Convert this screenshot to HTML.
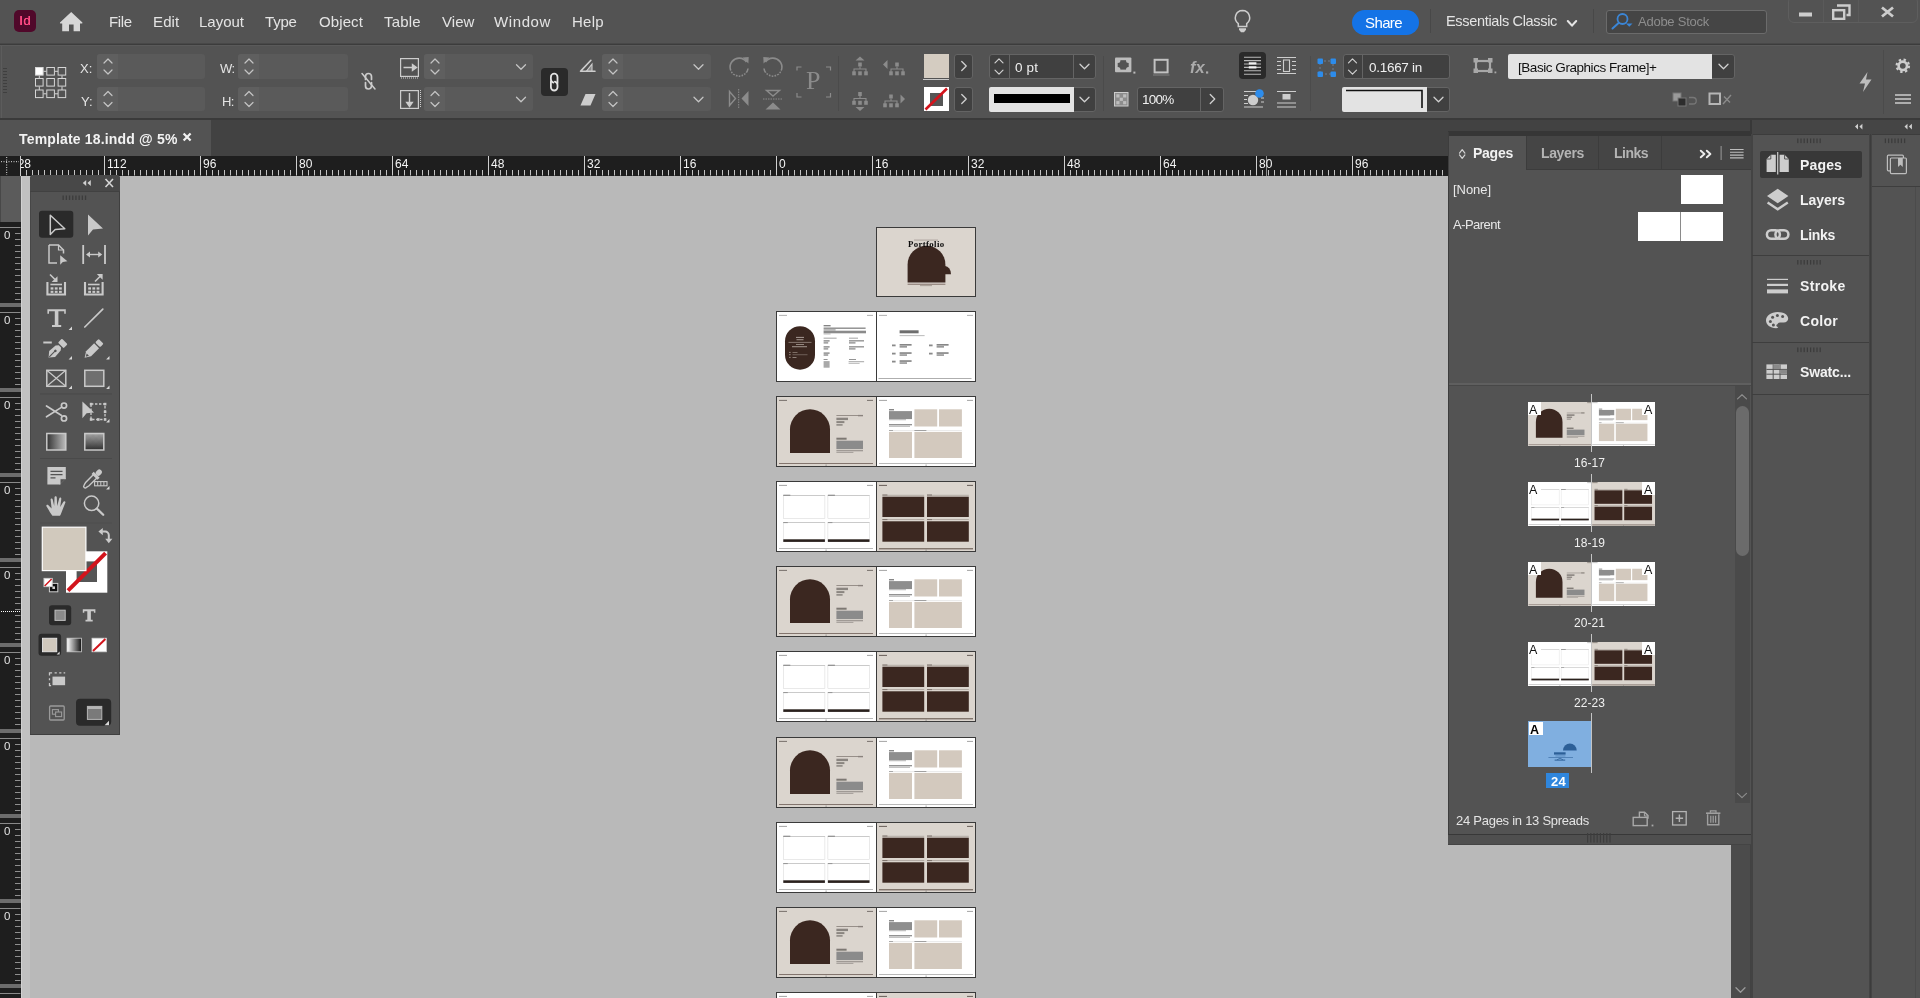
<!DOCTYPE html>
<html><head><meta charset="utf-8"><title>Template 18.indd</title><style>
*{margin:0;padding:0;box-sizing:border-box}
html,body{width:1920px;height:998px;overflow:hidden;background:#535353;font-family:"Liberation Sans",sans-serif;}
body{position:relative}
div,svg{position:absolute}
.t{white-space:nowrap;will-change:transform}
</style></head><body>
<div style="left:0px;top:0px;width:1920px;height:44px;background:#535353;"></div>
<div style="left:0px;top:43px;width:1920px;height:1px;background:#484848;"></div>
<div style="left:0px;top:44px;width:1920px;height:1px;background:#3c3c3c;"></div>
<div style="left:14px;top:10px;width:22px;height:22px;background:#50082a;border-radius:5px;"></div>
<div class="t" style="left:19.2px;top:14.43px;font-size:13.2px;line-height:13.2px;color:#ff4a84;letter-spacing:0.496px;text-shadow:0.45px 0 0 #ff4a84;">Id</div>
<div class="t" style="left:109px;top:14.00px;font-size:15px;line-height:15px;color:#e4e4e4;letter-spacing:-0.393px;">File</div>
<div class="t" style="left:153px;top:14.00px;font-size:15px;line-height:15px;color:#e4e4e4;letter-spacing:0.138px;">Edit</div>
<div class="t" style="left:199px;top:14.00px;font-size:15px;line-height:15px;color:#e4e4e4;letter-spacing:-0.006px;">Layout</div>
<div class="t" style="left:265px;top:14.00px;font-size:15px;line-height:15px;color:#e4e4e4;letter-spacing:-0.205px;">Type</div>
<div class="t" style="left:319px;top:14.00px;font-size:15px;line-height:15px;color:#e4e4e4;letter-spacing:0.108px;">Object</div>
<div class="t" style="left:384px;top:14.00px;font-size:15px;line-height:15px;color:#e4e4e4;letter-spacing:0.168px;">Table</div>
<div class="t" style="left:441.5px;top:14.00px;font-size:15px;line-height:15px;color:#e4e4e4;letter-spacing:0.065px;">View</div>
<div class="t" style="left:494px;top:14.00px;font-size:15px;line-height:15px;color:#e4e4e4;letter-spacing:0.608px;">Window</div>
<div class="t" style="left:572px;top:14.00px;font-size:15px;line-height:15px;color:#e4e4e4;letter-spacing:0.288px;">Help</div>
<div style="left:1351.5px;top:9.5px;width:67px;height:25px;background:#1473e6;border-radius:12.5px;"></div>
<div class="t" style="left:1365px;top:14.90px;font-size:15px;line-height:15px;color:#fff;letter-spacing:-0.605px;">Share</div>
<div style="left:1430px;top:9px;width:1px;height:24px;background:#484848;"></div>
<div class="t" style="left:1445.5px;top:13.93px;font-size:14.5px;line-height:14.5px;color:#e4e4e4;letter-spacing:-0.325px;">Essentials Classic</div>
<div style="left:1593px;top:9px;width:1px;height:24px;background:#484848;"></div>
<div style="left:1606px;top:10px;width:161px;height:24px;background:#454545;border:1px solid #6b6b6b;border-radius:3px;"></div>
<div class="t" style="left:1637.5px;top:15.00px;font-size:13px;line-height:13px;color:#8d8d8d;letter-spacing:-0.247px;">Adobe Stock</div>
<div style="left:1788px;top:-4px;width:130px;height:27px;background:#535353;border:1px solid #5e5e5e;border-radius:6px;"></div>
<div style="left:1823px;top:0px;width:1px;height:22px;background:#5a5a5a;"></div>
<div style="left:1858px;top:0px;width:1px;height:22px;background:#5a5a5a;"></div>
<div style="left:0px;top:45px;width:1920px;height:73px;background:#535353;"></div>
<div style="left:0px;top:118px;width:1920px;height:2px;background:#3a3a3a;"></div>
<div style="left:1px;top:45px;width:1px;height:73px;background:#5c5c5c;"></div>
<div style="left:0px;top:45px;width:1920px;height:1px;background:#5a5a5a;"></div>
<div style="left:3px;top:68px;width:4px;height:1px;background:#3f3f3f;"></div>
<div style="left:3px;top:71px;width:4px;height:1px;background:#3f3f3f;"></div>
<div style="left:3px;top:74px;width:4px;height:1px;background:#3f3f3f;"></div>
<div style="left:3px;top:77px;width:4px;height:1px;background:#3f3f3f;"></div>
<div style="left:3px;top:80px;width:4px;height:1px;background:#3f3f3f;"></div>
<div style="left:3px;top:83px;width:4px;height:1px;background:#3f3f3f;"></div>
<div style="left:3px;top:86px;width:4px;height:1px;background:#3f3f3f;"></div>
<div style="left:3px;top:89px;width:4px;height:1px;background:#3f3f3f;"></div>
<div style="left:3px;top:92px;width:4px;height:1px;background:#3f3f3f;"></div>
<div class="t" style="left:80px;top:62.30px;font-size:13px;line-height:13px;color:#e4e4e4;letter-spacing:0.109px;">X:</div>
<div class="t" style="left:80.5px;top:95.00px;font-size:13px;line-height:13px;color:#e4e4e4;letter-spacing:-0.033px;">Y:</div>
<div style="left:97px;top:54px;width:108px;height:25px;background:#5a5a5a;border-radius:3px;"></div>
<div style="left:97px;top:54px;width:21px;height:25px;background:#5f5f5f;border-radius:3px 0 0 3px;"></div>
<div style="left:97px;top:87px;width:108px;height:24px;background:#5a5a5a;border-radius:3px;"></div>
<div style="left:97px;top:87px;width:21px;height:24px;background:#5f5f5f;border-radius:3px 0 0 3px;"></div>
<div class="t" style="left:220px;top:62.30px;font-size:13px;line-height:13px;color:#e4e4e4;letter-spacing:-0.573px;">W:</div>
<div class="t" style="left:221.5px;top:95.00px;font-size:13px;line-height:13px;color:#e4e4e4;letter-spacing:-0.750px;">H:</div>
<div style="left:238px;top:54px;width:110px;height:25px;background:#5a5a5a;border-radius:3px;"></div>
<div style="left:238px;top:54px;width:21px;height:25px;background:#5f5f5f;border-radius:3px 0 0 3px;"></div>
<div style="left:238px;top:87px;width:110px;height:24px;background:#5a5a5a;border-radius:3px;"></div>
<div style="left:238px;top:87px;width:21px;height:24px;background:#5f5f5f;border-radius:3px 0 0 3px;"></div>
<div style="left:424px;top:54px;width:109px;height:25px;background:#5a5a5a;border-radius:3px;"></div>
<div style="left:424px;top:54px;width:21px;height:25px;background:#5f5f5f;border-radius:3px 0 0 3px;"></div>
<div style="left:424px;top:87px;width:109px;height:24px;background:#5a5a5a;border-radius:3px;"></div>
<div style="left:424px;top:87px;width:21px;height:24px;background:#5f5f5f;border-radius:3px 0 0 3px;"></div>
<div style="left:540.5px;top:68px;width:27.5px;height:27.5px;background:#2a2a2a;border-radius:4px;"></div>
<div style="left:602px;top:54px;width:108.5px;height:25px;background:#5a5a5a;border-radius:3px;"></div>
<div style="left:602px;top:54px;width:21px;height:25px;background:#5f5f5f;border-radius:3px 0 0 3px;"></div>
<div style="left:602px;top:87px;width:108.5px;height:24px;background:#5a5a5a;border-radius:3px;"></div>
<div style="left:602px;top:87px;width:21px;height:24px;background:#5f5f5f;border-radius:3px 0 0 3px;"></div>
<div class="t" style="left:806px;top:68.42px;font-size:26px;line-height:26px;color:#8b8b8b;font-family:'Liberation Serif',serif;letter-spacing:0.540px;">P</div>
<div style="left:838px;top:56px;width:1px;height:55px;background:#4b4b4b;"></div>
<div style="left:924px;top:54px;width:24.5px;height:23.5px;background:#d4ccc1;"></div>
<div style="left:923px;top:79px;width:26px;height:1px;background:#c9c9c9;"></div>
<div style="left:954px;top:54px;width:19px;height:24.5px;background:#404040;border:1px solid #646464;border-radius:3px;"></div>
<div style="left:954px;top:87px;width:19px;height:24.5px;background:#404040;border:1px solid #646464;border-radius:3px;"></div>
<div style="left:924px;top:87px;width:24.5px;height:24px;background:#fff;"></div>
<div style="left:929.5px;top:92.5px;width:13px;height:13px;background:#555;"></div>
<div style="left:989px;top:54px;width:106.5px;height:24.5px;background:#404040;border:1px solid #646464;border-radius:3px;"></div>
<div style="left:1009px;top:55px;width:1px;height:22.5px;background:#646464;"></div>
<div style="left:1073px;top:55px;width:1px;height:22.5px;background:#646464;"></div>
<div class="t" style="left:1014.6px;top:60.87px;font-size:13.5px;line-height:13.5px;color:#f0f0f0;letter-spacing:0.121px;">0 pt</div>
<div style="left:989px;top:87px;width:106.5px;height:24.5px;background:#404040;border:1px solid #646464;border-radius:3px;"></div>
<div style="left:989px;top:87px;width:84.5px;height:24.5px;background:#e3e3e3;border-radius:2px 0 0 2px;"></div>
<div style="left:994px;top:94px;width:75.5px;height:8.5px;background:#000;"></div>
<div style="left:1103px;top:56px;width:1px;height:55px;background:#4b4b4b;"></div>
<div class="t" style="left:1190px;top:59.03px;font-size:16.5px;line-height:16.5px;color:#ababab;font-weight:bold;letter-spacing:-0.086px;font-style:italic;">fx</div>
<div style="left:1137px;top:87px;width:86.5px;height:24.5px;background:#404040;border:1px solid #646464;border-radius:3px;"></div>
<div style="left:1200px;top:88px;width:1px;height:22.5px;background:#646464;"></div>
<div class="t" style="left:1142px;top:93.37px;font-size:13.5px;line-height:13.5px;color:#f0f0f0;letter-spacing:-0.757px;">100%</div>
<div style="left:1239px;top:52px;width:27px;height:27px;background:#2a2a2a;border-radius:4px;"></div>
<div style="left:1310px;top:56px;width:1px;height:55px;background:#4b4b4b;"></div>
<div style="left:1343px;top:54px;width:106.5px;height:24.5px;background:#404040;border:1px solid #646464;border-radius:3px;"></div>
<div style="left:1362px;top:55px;width:1px;height:22.5px;background:#646464;"></div>
<div class="t" style="left:1369px;top:60.87px;font-size:13.5px;line-height:13.5px;color:#f0f0f0;letter-spacing:-0.283px;">0.1667 in</div>
<div style="left:1342px;top:87px;width:107.5px;height:24.5px;background:#404040;border:1px solid #646464;border-radius:3px;"></div>
<div style="left:1342px;top:87px;width:85px;height:24.5px;background:#e3e3e3;border-radius:2px 0 0 2px;"></div>
<div style="left:1508px;top:54px;width:226.5px;height:24.5px;background:#404040;border:1px solid #646464;border-radius:3px;"></div>
<div style="left:1508px;top:54px;width:204px;height:24.5px;background:#e3e3e3;border-radius:2px 0 0 2px;"></div>
<div class="t" style="left:1518px;top:60.57px;font-size:13.5px;line-height:13.5px;color:#111;letter-spacing:-0.453px;">[Basic Graphics Frame]+</div>
<div style="left:1883px;top:50px;width:1px;height:64px;background:#4b4b4b;"></div>
<div style="left:0px;top:120px;width:1920px;height:36px;background:#424242;"></div>
<div style="left:0px;top:120px;width:211px;height:36px;background:#535353;"></div>
<div class="t" style="left:19px;top:132.15px;font-size:14px;line-height:14px;color:#f2f2f2;font-weight:bold;letter-spacing:0.167px;">Template 18.indd @ 5%</div>
<div style="left:0px;top:156px;width:1920px;height:842px;background:#b9b9b9;"></div>
<div style="left:0px;top:156px;width:1752px;height:19.5px;background:#1e1e1e;"></div>
<svg style="left:0px;top:155px" width="1752" height="21" viewBox="0 155 1752 21"><rect x="20" y="170" width="1" height="5.5" fill="#c4c4c4"/><rect x="26" y="170" width="1" height="5.5" fill="#c4c4c4"/><rect x="32" y="170" width="1" height="5.5" fill="#c4c4c4"/><rect x="38" y="170" width="1" height="5.5" fill="#c4c4c4"/><rect x="44" y="170" width="1" height="5.5" fill="#c4c4c4"/><rect x="50" y="170" width="1" height="5.5" fill="#c4c4c4"/><rect x="56" y="170" width="1" height="5.5" fill="#c4c4c4"/><rect x="62" y="170" width="1" height="5.5" fill="#c4c4c4"/><rect x="68" y="170" width="1" height="5.5" fill="#c4c4c4"/><rect x="74" y="170" width="1" height="5.5" fill="#c4c4c4"/><rect x="80" y="170" width="1" height="5.5" fill="#c4c4c4"/><rect x="86" y="170" width="1" height="5.5" fill="#c4c4c4"/><rect x="92" y="170" width="1" height="5.5" fill="#c4c4c4"/><rect x="98" y="170" width="1" height="5.5" fill="#c4c4c4"/><rect x="104" y="156" width="1" height="19.5" fill="#cfcfcf"/><rect x="110" y="170" width="1" height="5.5" fill="#c4c4c4"/><rect x="116" y="170" width="1" height="5.5" fill="#c4c4c4"/><rect x="122" y="170" width="1" height="5.5" fill="#c4c4c4"/><rect x="128" y="170" width="1" height="5.5" fill="#c4c4c4"/><rect x="134" y="170" width="1" height="5.5" fill="#c4c4c4"/><rect x="140" y="170" width="1" height="5.5" fill="#c4c4c4"/><rect x="146" y="170" width="1" height="5.5" fill="#c4c4c4"/><rect x="152" y="170" width="1" height="5.5" fill="#c4c4c4"/><rect x="158" y="170" width="1" height="5.5" fill="#c4c4c4"/><rect x="164" y="170" width="1" height="5.5" fill="#c4c4c4"/><rect x="170" y="170" width="1" height="5.5" fill="#c4c4c4"/><rect x="176" y="170" width="1" height="5.5" fill="#c4c4c4"/><rect x="182" y="170" width="1" height="5.5" fill="#c4c4c4"/><rect x="188" y="170" width="1" height="5.5" fill="#c4c4c4"/><rect x="194" y="170" width="1" height="5.5" fill="#c4c4c4"/><rect x="200" y="156" width="1" height="19.5" fill="#cfcfcf"/><rect x="206" y="170" width="1" height="5.5" fill="#c4c4c4"/><rect x="212" y="170" width="1" height="5.5" fill="#c4c4c4"/><rect x="218" y="170" width="1" height="5.5" fill="#c4c4c4"/><rect x="224" y="170" width="1" height="5.5" fill="#c4c4c4"/><rect x="230" y="170" width="1" height="5.5" fill="#c4c4c4"/><rect x="236" y="170" width="1" height="5.5" fill="#c4c4c4"/><rect x="242" y="170" width="1" height="5.5" fill="#c4c4c4"/><rect x="248" y="170" width="1" height="5.5" fill="#c4c4c4"/><rect x="254" y="170" width="1" height="5.5" fill="#c4c4c4"/><rect x="260" y="170" width="1" height="5.5" fill="#c4c4c4"/><rect x="266" y="170" width="1" height="5.5" fill="#c4c4c4"/><rect x="272" y="170" width="1" height="5.5" fill="#c4c4c4"/><rect x="278" y="170" width="1" height="5.5" fill="#c4c4c4"/><rect x="284" y="170" width="1" height="5.5" fill="#c4c4c4"/><rect x="290" y="170" width="1" height="5.5" fill="#c4c4c4"/><rect x="296" y="156" width="1" height="19.5" fill="#cfcfcf"/><rect x="302" y="170" width="1" height="5.5" fill="#c4c4c4"/><rect x="308" y="170" width="1" height="5.5" fill="#c4c4c4"/><rect x="314" y="170" width="1" height="5.5" fill="#c4c4c4"/><rect x="320" y="170" width="1" height="5.5" fill="#c4c4c4"/><rect x="326" y="170" width="1" height="5.5" fill="#c4c4c4"/><rect x="332" y="170" width="1" height="5.5" fill="#c4c4c4"/><rect x="338" y="170" width="1" height="5.5" fill="#c4c4c4"/><rect x="344" y="170" width="1" height="5.5" fill="#c4c4c4"/><rect x="350" y="170" width="1" height="5.5" fill="#c4c4c4"/><rect x="356" y="170" width="1" height="5.5" fill="#c4c4c4"/><rect x="362" y="170" width="1" height="5.5" fill="#c4c4c4"/><rect x="368" y="170" width="1" height="5.5" fill="#c4c4c4"/><rect x="374" y="170" width="1" height="5.5" fill="#c4c4c4"/><rect x="380" y="170" width="1" height="5.5" fill="#c4c4c4"/><rect x="386" y="170" width="1" height="5.5" fill="#c4c4c4"/><rect x="392" y="156" width="1" height="19.5" fill="#cfcfcf"/><rect x="398" y="170" width="1" height="5.5" fill="#c4c4c4"/><rect x="404" y="170" width="1" height="5.5" fill="#c4c4c4"/><rect x="410" y="170" width="1" height="5.5" fill="#c4c4c4"/><rect x="416" y="170" width="1" height="5.5" fill="#c4c4c4"/><rect x="422" y="170" width="1" height="5.5" fill="#c4c4c4"/><rect x="428" y="170" width="1" height="5.5" fill="#c4c4c4"/><rect x="434" y="170" width="1" height="5.5" fill="#c4c4c4"/><rect x="440" y="170" width="1" height="5.5" fill="#c4c4c4"/><rect x="446" y="170" width="1" height="5.5" fill="#c4c4c4"/><rect x="452" y="170" width="1" height="5.5" fill="#c4c4c4"/><rect x="458" y="170" width="1" height="5.5" fill="#c4c4c4"/><rect x="464" y="170" width="1" height="5.5" fill="#c4c4c4"/><rect x="470" y="170" width="1" height="5.5" fill="#c4c4c4"/><rect x="476" y="170" width="1" height="5.5" fill="#c4c4c4"/><rect x="482" y="170" width="1" height="5.5" fill="#c4c4c4"/><rect x="488" y="156" width="1" height="19.5" fill="#cfcfcf"/><rect x="494" y="170" width="1" height="5.5" fill="#c4c4c4"/><rect x="500" y="170" width="1" height="5.5" fill="#c4c4c4"/><rect x="506" y="170" width="1" height="5.5" fill="#c4c4c4"/><rect x="512" y="170" width="1" height="5.5" fill="#c4c4c4"/><rect x="518" y="170" width="1" height="5.5" fill="#c4c4c4"/><rect x="524" y="170" width="1" height="5.5" fill="#c4c4c4"/><rect x="530" y="170" width="1" height="5.5" fill="#c4c4c4"/><rect x="536" y="170" width="1" height="5.5" fill="#c4c4c4"/><rect x="542" y="170" width="1" height="5.5" fill="#c4c4c4"/><rect x="548" y="170" width="1" height="5.5" fill="#c4c4c4"/><rect x="554" y="170" width="1" height="5.5" fill="#c4c4c4"/><rect x="560" y="170" width="1" height="5.5" fill="#c4c4c4"/><rect x="566" y="170" width="1" height="5.5" fill="#c4c4c4"/><rect x="572" y="170" width="1" height="5.5" fill="#c4c4c4"/><rect x="578" y="170" width="1" height="5.5" fill="#c4c4c4"/><rect x="584" y="156" width="1" height="19.5" fill="#cfcfcf"/><rect x="590" y="170" width="1" height="5.5" fill="#c4c4c4"/><rect x="596" y="170" width="1" height="5.5" fill="#c4c4c4"/><rect x="602" y="170" width="1" height="5.5" fill="#c4c4c4"/><rect x="608" y="170" width="1" height="5.5" fill="#c4c4c4"/><rect x="614" y="170" width="1" height="5.5" fill="#c4c4c4"/><rect x="620" y="170" width="1" height="5.5" fill="#c4c4c4"/><rect x="626" y="170" width="1" height="5.5" fill="#c4c4c4"/><rect x="632" y="170" width="1" height="5.5" fill="#c4c4c4"/><rect x="638" y="170" width="1" height="5.5" fill="#c4c4c4"/><rect x="644" y="170" width="1" height="5.5" fill="#c4c4c4"/><rect x="650" y="170" width="1" height="5.5" fill="#c4c4c4"/><rect x="656" y="170" width="1" height="5.5" fill="#c4c4c4"/><rect x="662" y="170" width="1" height="5.5" fill="#c4c4c4"/><rect x="668" y="170" width="1" height="5.5" fill="#c4c4c4"/><rect x="674" y="170" width="1" height="5.5" fill="#c4c4c4"/><rect x="680" y="156" width="1" height="19.5" fill="#cfcfcf"/><rect x="686" y="170" width="1" height="5.5" fill="#c4c4c4"/><rect x="692" y="170" width="1" height="5.5" fill="#c4c4c4"/><rect x="698" y="170" width="1" height="5.5" fill="#c4c4c4"/><rect x="704" y="170" width="1" height="5.5" fill="#c4c4c4"/><rect x="710" y="170" width="1" height="5.5" fill="#c4c4c4"/><rect x="716" y="170" width="1" height="5.5" fill="#c4c4c4"/><rect x="722" y="170" width="1" height="5.5" fill="#c4c4c4"/><rect x="728" y="170" width="1" height="5.5" fill="#c4c4c4"/><rect x="734" y="170" width="1" height="5.5" fill="#c4c4c4"/><rect x="740" y="170" width="1" height="5.5" fill="#c4c4c4"/><rect x="746" y="170" width="1" height="5.5" fill="#c4c4c4"/><rect x="752" y="170" width="1" height="5.5" fill="#c4c4c4"/><rect x="758" y="170" width="1" height="5.5" fill="#c4c4c4"/><rect x="764" y="170" width="1" height="5.5" fill="#c4c4c4"/><rect x="770" y="170" width="1" height="5.5" fill="#c4c4c4"/><rect x="776" y="156" width="1" height="19.5" fill="#cfcfcf"/><rect x="782" y="170" width="1" height="5.5" fill="#c4c4c4"/><rect x="788" y="170" width="1" height="5.5" fill="#c4c4c4"/><rect x="794" y="170" width="1" height="5.5" fill="#c4c4c4"/><rect x="800" y="170" width="1" height="5.5" fill="#c4c4c4"/><rect x="806" y="170" width="1" height="5.5" fill="#c4c4c4"/><rect x="812" y="170" width="1" height="5.5" fill="#c4c4c4"/><rect x="818" y="170" width="1" height="5.5" fill="#c4c4c4"/><rect x="824" y="170" width="1" height="5.5" fill="#c4c4c4"/><rect x="830" y="170" width="1" height="5.5" fill="#c4c4c4"/><rect x="836" y="170" width="1" height="5.5" fill="#c4c4c4"/><rect x="842" y="170" width="1" height="5.5" fill="#c4c4c4"/><rect x="848" y="170" width="1" height="5.5" fill="#c4c4c4"/><rect x="854" y="170" width="1" height="5.5" fill="#c4c4c4"/><rect x="860" y="170" width="1" height="5.5" fill="#c4c4c4"/><rect x="866" y="170" width="1" height="5.5" fill="#c4c4c4"/><rect x="872" y="156" width="1" height="19.5" fill="#cfcfcf"/><rect x="878" y="170" width="1" height="5.5" fill="#c4c4c4"/><rect x="884" y="170" width="1" height="5.5" fill="#c4c4c4"/><rect x="890" y="170" width="1" height="5.5" fill="#c4c4c4"/><rect x="896" y="170" width="1" height="5.5" fill="#c4c4c4"/><rect x="902" y="170" width="1" height="5.5" fill="#c4c4c4"/><rect x="908" y="170" width="1" height="5.5" fill="#c4c4c4"/><rect x="914" y="170" width="1" height="5.5" fill="#c4c4c4"/><rect x="920" y="170" width="1" height="5.5" fill="#c4c4c4"/><rect x="926" y="170" width="1" height="5.5" fill="#c4c4c4"/><rect x="932" y="170" width="1" height="5.5" fill="#c4c4c4"/><rect x="938" y="170" width="1" height="5.5" fill="#c4c4c4"/><rect x="944" y="170" width="1" height="5.5" fill="#c4c4c4"/><rect x="950" y="170" width="1" height="5.5" fill="#c4c4c4"/><rect x="956" y="170" width="1" height="5.5" fill="#c4c4c4"/><rect x="962" y="170" width="1" height="5.5" fill="#c4c4c4"/><rect x="968" y="156" width="1" height="19.5" fill="#cfcfcf"/><rect x="974" y="170" width="1" height="5.5" fill="#c4c4c4"/><rect x="980" y="170" width="1" height="5.5" fill="#c4c4c4"/><rect x="986" y="170" width="1" height="5.5" fill="#c4c4c4"/><rect x="992" y="170" width="1" height="5.5" fill="#c4c4c4"/><rect x="998" y="170" width="1" height="5.5" fill="#c4c4c4"/><rect x="1004" y="170" width="1" height="5.5" fill="#c4c4c4"/><rect x="1010" y="170" width="1" height="5.5" fill="#c4c4c4"/><rect x="1016" y="170" width="1" height="5.5" fill="#c4c4c4"/><rect x="1022" y="170" width="1" height="5.5" fill="#c4c4c4"/><rect x="1028" y="170" width="1" height="5.5" fill="#c4c4c4"/><rect x="1034" y="170" width="1" height="5.5" fill="#c4c4c4"/><rect x="1040" y="170" width="1" height="5.5" fill="#c4c4c4"/><rect x="1046" y="170" width="1" height="5.5" fill="#c4c4c4"/><rect x="1052" y="170" width="1" height="5.5" fill="#c4c4c4"/><rect x="1058" y="170" width="1" height="5.5" fill="#c4c4c4"/><rect x="1064" y="156" width="1" height="19.5" fill="#cfcfcf"/><rect x="1070" y="170" width="1" height="5.5" fill="#c4c4c4"/><rect x="1076" y="170" width="1" height="5.5" fill="#c4c4c4"/><rect x="1082" y="170" width="1" height="5.5" fill="#c4c4c4"/><rect x="1088" y="170" width="1" height="5.5" fill="#c4c4c4"/><rect x="1094" y="170" width="1" height="5.5" fill="#c4c4c4"/><rect x="1100" y="170" width="1" height="5.5" fill="#c4c4c4"/><rect x="1106" y="170" width="1" height="5.5" fill="#c4c4c4"/><rect x="1112" y="170" width="1" height="5.5" fill="#c4c4c4"/><rect x="1118" y="170" width="1" height="5.5" fill="#c4c4c4"/><rect x="1124" y="170" width="1" height="5.5" fill="#c4c4c4"/><rect x="1130" y="170" width="1" height="5.5" fill="#c4c4c4"/><rect x="1136" y="170" width="1" height="5.5" fill="#c4c4c4"/><rect x="1142" y="170" width="1" height="5.5" fill="#c4c4c4"/><rect x="1148" y="170" width="1" height="5.5" fill="#c4c4c4"/><rect x="1154" y="170" width="1" height="5.5" fill="#c4c4c4"/><rect x="1160" y="156" width="1" height="19.5" fill="#cfcfcf"/><rect x="1166" y="170" width="1" height="5.5" fill="#c4c4c4"/><rect x="1172" y="170" width="1" height="5.5" fill="#c4c4c4"/><rect x="1178" y="170" width="1" height="5.5" fill="#c4c4c4"/><rect x="1184" y="170" width="1" height="5.5" fill="#c4c4c4"/><rect x="1190" y="170" width="1" height="5.5" fill="#c4c4c4"/><rect x="1196" y="170" width="1" height="5.5" fill="#c4c4c4"/><rect x="1202" y="170" width="1" height="5.5" fill="#c4c4c4"/><rect x="1208" y="170" width="1" height="5.5" fill="#c4c4c4"/><rect x="1214" y="170" width="1" height="5.5" fill="#c4c4c4"/><rect x="1220" y="170" width="1" height="5.5" fill="#c4c4c4"/><rect x="1226" y="170" width="1" height="5.5" fill="#c4c4c4"/><rect x="1232" y="170" width="1" height="5.5" fill="#c4c4c4"/><rect x="1238" y="170" width="1" height="5.5" fill="#c4c4c4"/><rect x="1244" y="170" width="1" height="5.5" fill="#c4c4c4"/><rect x="1250" y="170" width="1" height="5.5" fill="#c4c4c4"/><rect x="1256" y="156" width="1" height="19.5" fill="#cfcfcf"/><rect x="1262" y="170" width="1" height="5.5" fill="#c4c4c4"/><rect x="1268" y="170" width="1" height="5.5" fill="#c4c4c4"/><rect x="1274" y="170" width="1" height="5.5" fill="#c4c4c4"/><rect x="1280" y="170" width="1" height="5.5" fill="#c4c4c4"/><rect x="1286" y="170" width="1" height="5.5" fill="#c4c4c4"/><rect x="1292" y="170" width="1" height="5.5" fill="#c4c4c4"/><rect x="1298" y="170" width="1" height="5.5" fill="#c4c4c4"/><rect x="1304" y="170" width="1" height="5.5" fill="#c4c4c4"/><rect x="1310" y="170" width="1" height="5.5" fill="#c4c4c4"/><rect x="1316" y="170" width="1" height="5.5" fill="#c4c4c4"/><rect x="1322" y="170" width="1" height="5.5" fill="#c4c4c4"/><rect x="1328" y="170" width="1" height="5.5" fill="#c4c4c4"/><rect x="1334" y="170" width="1" height="5.5" fill="#c4c4c4"/><rect x="1340" y="170" width="1" height="5.5" fill="#c4c4c4"/><rect x="1346" y="170" width="1" height="5.5" fill="#c4c4c4"/><rect x="1352" y="156" width="1" height="19.5" fill="#cfcfcf"/><rect x="1358" y="170" width="1" height="5.5" fill="#c4c4c4"/><rect x="1364" y="170" width="1" height="5.5" fill="#c4c4c4"/><rect x="1370" y="170" width="1" height="5.5" fill="#c4c4c4"/><rect x="1376" y="170" width="1" height="5.5" fill="#c4c4c4"/><rect x="1382" y="170" width="1" height="5.5" fill="#c4c4c4"/><rect x="1388" y="170" width="1" height="5.5" fill="#c4c4c4"/><rect x="1394" y="170" width="1" height="5.5" fill="#c4c4c4"/><rect x="1400" y="170" width="1" height="5.5" fill="#c4c4c4"/><rect x="1406" y="170" width="1" height="5.5" fill="#c4c4c4"/><rect x="1412" y="170" width="1" height="5.5" fill="#c4c4c4"/><rect x="1418" y="170" width="1" height="5.5" fill="#c4c4c4"/><rect x="1424" y="170" width="1" height="5.5" fill="#c4c4c4"/><rect x="1430" y="170" width="1" height="5.5" fill="#c4c4c4"/><rect x="1436" y="170" width="1" height="5.5" fill="#c4c4c4"/><rect x="1442" y="170" width="1" height="5.5" fill="#c4c4c4"/><rect x="1448" y="156" width="1" height="19.5" fill="#cfcfcf"/><rect x="1454" y="170" width="1" height="5.5" fill="#c4c4c4"/><rect x="1460" y="170" width="1" height="5.5" fill="#c4c4c4"/><rect x="1466" y="170" width="1" height="5.5" fill="#c4c4c4"/><rect x="1472" y="170" width="1" height="5.5" fill="#c4c4c4"/><rect x="1478" y="170" width="1" height="5.5" fill="#c4c4c4"/><rect x="1484" y="170" width="1" height="5.5" fill="#c4c4c4"/><rect x="1490" y="170" width="1" height="5.5" fill="#c4c4c4"/><rect x="1496" y="170" width="1" height="5.5" fill="#c4c4c4"/><rect x="1502" y="170" width="1" height="5.5" fill="#c4c4c4"/><rect x="1508" y="170" width="1" height="5.5" fill="#c4c4c4"/><rect x="1514" y="170" width="1" height="5.5" fill="#c4c4c4"/><rect x="1520" y="170" width="1" height="5.5" fill="#c4c4c4"/><rect x="1526" y="170" width="1" height="5.5" fill="#c4c4c4"/><rect x="1532" y="170" width="1" height="5.5" fill="#c4c4c4"/><rect x="1538" y="170" width="1" height="5.5" fill="#c4c4c4"/><rect x="1544" y="156" width="1" height="19.5" fill="#cfcfcf"/><rect x="1550" y="170" width="1" height="5.5" fill="#c4c4c4"/><rect x="1556" y="170" width="1" height="5.5" fill="#c4c4c4"/><rect x="1562" y="170" width="1" height="5.5" fill="#c4c4c4"/><rect x="1568" y="170" width="1" height="5.5" fill="#c4c4c4"/><rect x="1574" y="170" width="1" height="5.5" fill="#c4c4c4"/><rect x="1580" y="170" width="1" height="5.5" fill="#c4c4c4"/><rect x="1586" y="170" width="1" height="5.5" fill="#c4c4c4"/><rect x="1592" y="170" width="1" height="5.5" fill="#c4c4c4"/><rect x="1598" y="170" width="1" height="5.5" fill="#c4c4c4"/><rect x="1604" y="170" width="1" height="5.5" fill="#c4c4c4"/><rect x="1610" y="170" width="1" height="5.5" fill="#c4c4c4"/><rect x="1616" y="170" width="1" height="5.5" fill="#c4c4c4"/><rect x="1622" y="170" width="1" height="5.5" fill="#c4c4c4"/><rect x="1628" y="170" width="1" height="5.5" fill="#c4c4c4"/><rect x="1634" y="170" width="1" height="5.5" fill="#c4c4c4"/><rect x="1640" y="156" width="1" height="19.5" fill="#cfcfcf"/><rect x="1646" y="170" width="1" height="5.5" fill="#c4c4c4"/><rect x="1652" y="170" width="1" height="5.5" fill="#c4c4c4"/><rect x="1658" y="170" width="1" height="5.5" fill="#c4c4c4"/><rect x="1664" y="170" width="1" height="5.5" fill="#c4c4c4"/><rect x="1670" y="170" width="1" height="5.5" fill="#c4c4c4"/><rect x="1676" y="170" width="1" height="5.5" fill="#c4c4c4"/><rect x="1682" y="170" width="1" height="5.5" fill="#c4c4c4"/><rect x="1688" y="170" width="1" height="5.5" fill="#c4c4c4"/><rect x="1694" y="170" width="1" height="5.5" fill="#c4c4c4"/><rect x="1700" y="170" width="1" height="5.5" fill="#c4c4c4"/><rect x="1706" y="170" width="1" height="5.5" fill="#c4c4c4"/><rect x="1712" y="170" width="1" height="5.5" fill="#c4c4c4"/><rect x="1718" y="170" width="1" height="5.5" fill="#c4c4c4"/><rect x="1724" y="170" width="1" height="5.5" fill="#c4c4c4"/><rect x="1730" y="170" width="1" height="5.5" fill="#c4c4c4"/><rect x="1736" y="156" width="1" height="19.5" fill="#cfcfcf"/><rect x="1742" y="170" width="1" height="5.5" fill="#c4c4c4"/><rect x="1748" y="170" width="1" height="5.5" fill="#c4c4c4"/><path d="M1266.5 156.5 v19" stroke="#fff" stroke-width="1" stroke-dasharray="1 1"/></svg>
<div style="left:20px;top:156px;width:40px;height:19px;overflow:hidden"><div class="t" style="left:-8.7px;top:1.84px;font-size:12px;line-height:12px;color:#f4f4f4;letter-spacing:-0.024px;">128</div></div>
<div class="t" style="left:107.3px;top:157.84px;font-size:12px;line-height:12px;color:#f4f4f4;letter-spacing:0.273px;">112</div>
<div class="t" style="left:203.3px;top:157.84px;font-size:12px;line-height:12px;color:#f4f4f4;letter-spacing:-0.024px;">96</div>
<div class="t" style="left:299.3px;top:157.84px;font-size:12px;line-height:12px;color:#f4f4f4;letter-spacing:-0.024px;">80</div>
<div class="t" style="left:395.3px;top:157.84px;font-size:12px;line-height:12px;color:#f4f4f4;letter-spacing:-0.024px;">64</div>
<div class="t" style="left:491.3px;top:157.84px;font-size:12px;line-height:12px;color:#f4f4f4;letter-spacing:-0.024px;">48</div>
<div class="t" style="left:587.3px;top:157.84px;font-size:12px;line-height:12px;color:#f4f4f4;letter-spacing:-0.024px;">32</div>
<div class="t" style="left:683.3px;top:157.84px;font-size:12px;line-height:12px;color:#f4f4f4;letter-spacing:-0.024px;">16</div>
<div class="t" style="left:779.3px;top:157.84px;font-size:12px;line-height:12px;color:#f4f4f4;letter-spacing:-0.024px;">0</div>
<div class="t" style="left:875.3px;top:157.84px;font-size:12px;line-height:12px;color:#f4f4f4;letter-spacing:-0.024px;">16</div>
<div class="t" style="left:971.3px;top:157.84px;font-size:12px;line-height:12px;color:#f4f4f4;letter-spacing:-0.024px;">32</div>
<div class="t" style="left:1067.3px;top:157.84px;font-size:12px;line-height:12px;color:#f4f4f4;letter-spacing:-0.024px;">48</div>
<div class="t" style="left:1163.3px;top:157.84px;font-size:12px;line-height:12px;color:#f4f4f4;letter-spacing:-0.024px;">64</div>
<div class="t" style="left:1259.3px;top:157.84px;font-size:12px;line-height:12px;color:#f4f4f4;letter-spacing:-0.024px;">80</div>
<div class="t" style="left:1355.3px;top:157.84px;font-size:12px;line-height:12px;color:#f4f4f4;letter-spacing:-0.024px;">96</div>
<div class="t" style="left:1451.3px;top:157.84px;font-size:12px;line-height:12px;color:#f4f4f4;letter-spacing:0.273px;">112</div>
<div style="left:0px;top:156px;width:20.5px;height:19.5px;background:#1e1e1e;"></div>
<svg style="left:0;top:155px" width="20" height="20" viewBox="0 0 20 20"><path d="M1 6.7 h18" stroke="#e0e0e0" stroke-width="1" stroke-dasharray="1 1.5"/><path d="M6.7 2 v18" stroke="#e0e0e0" stroke-width="1" stroke-dasharray="1 1.5"/></svg>
<div style="left:20px;top:156px;width:1px;height:19.5px;background:#cfcfcf;"></div>
<div style="left:20px;top:175.5px;width:10px;height:823px;background:#c1c1c1;"></div>
<div style="left:20px;top:175.5px;width:1.5px;height:823px;background:#d2d2d2;"></div>
<div style="left:0px;top:175.5px;width:20.5px;height:823px;background:#1e1e1e;"></div>
<div style="left:0px;top:175.5px;width:20.5px;height:46.2px;background:#5b5b5b;"></div>
<div style="left:0px;top:175.5px;width:1px;height:46.2px;background:#484848;"></div>
<div class="t" style="left:3.8px;top:229.87px;font-size:11.5px;line-height:11.5px;color:#e0e0e0;letter-spacing:-0.996px;">0</div>
<div style="left:0px;top:303px;width:20.5px;height:3.8px;background:#6c6c6c;"></div>
<div class="t" style="left:3.8px;top:314.87px;font-size:11.5px;line-height:11.5px;color:#e0e0e0;letter-spacing:-0.996px;">0</div>
<div style="left:0px;top:388px;width:20.5px;height:3.8px;background:#6c6c6c;"></div>
<div class="t" style="left:3.8px;top:399.87px;font-size:11.5px;line-height:11.5px;color:#e0e0e0;letter-spacing:-0.996px;">0</div>
<div style="left:0px;top:473px;width:20.5px;height:3.8px;background:#6c6c6c;"></div>
<div class="t" style="left:3.8px;top:484.87px;font-size:11.5px;line-height:11.5px;color:#e0e0e0;letter-spacing:-0.996px;">0</div>
<div style="left:0px;top:558px;width:20.5px;height:3.8px;background:#6c6c6c;"></div>
<div class="t" style="left:3.8px;top:569.87px;font-size:11.5px;line-height:11.5px;color:#e0e0e0;letter-spacing:-0.996px;">0</div>
<div style="left:0px;top:643px;width:20.5px;height:3.8px;background:#6c6c6c;"></div>
<div class="t" style="left:3.8px;top:654.87px;font-size:11.5px;line-height:11.5px;color:#e0e0e0;letter-spacing:-0.996px;">0</div>
<div style="left:0px;top:729px;width:20.5px;height:3.8px;background:#6c6c6c;"></div>
<div class="t" style="left:3.8px;top:740.87px;font-size:11.5px;line-height:11.5px;color:#e0e0e0;letter-spacing:-0.996px;">0</div>
<div style="left:0px;top:814px;width:20.5px;height:3.8px;background:#6c6c6c;"></div>
<div class="t" style="left:3.8px;top:825.87px;font-size:11.5px;line-height:11.5px;color:#e0e0e0;letter-spacing:-0.996px;">0</div>
<div style="left:0px;top:899px;width:20.5px;height:3.8px;background:#6c6c6c;"></div>
<div class="t" style="left:3.8px;top:910.87px;font-size:11.5px;line-height:11.5px;color:#e0e0e0;letter-spacing:-0.996px;">0</div>
<div style="left:0px;top:984px;width:20.5px;height:3.8px;background:#6c6c6c;"></div>
<svg style="left:0px;top:175px" width="21" height="823" viewBox="0 175 21 823"><rect x="0" y="227" width="20.5" height="1" fill="#8a8a8a"/><rect x="15" y="233" width="5.5" height="1" fill="#8f8f8f"/><rect x="15" y="239" width="5.5" height="1" fill="#8f8f8f"/><rect x="15" y="245" width="5.5" height="1" fill="#8f8f8f"/><rect x="15" y="251" width="5.5" height="1" fill="#8f8f8f"/><rect x="15" y="257" width="5.5" height="1" fill="#8f8f8f"/><rect x="15" y="263" width="5.5" height="1" fill="#8f8f8f"/><rect x="15" y="269" width="5.5" height="1" fill="#8f8f8f"/><rect x="15" y="275" width="5.5" height="1" fill="#8f8f8f"/><rect x="15" y="281" width="5.5" height="1" fill="#8f8f8f"/><rect x="15" y="287" width="5.5" height="1" fill="#8f8f8f"/><rect x="15" y="293" width="5.5" height="1" fill="#8f8f8f"/><rect x="15" y="299" width="5.5" height="1" fill="#8f8f8f"/><rect x="0" y="312" width="20.5" height="1" fill="#8a8a8a"/><rect x="15" y="318" width="5.5" height="1" fill="#8f8f8f"/><rect x="15" y="324" width="5.5" height="1" fill="#8f8f8f"/><rect x="15" y="330" width="5.5" height="1" fill="#8f8f8f"/><rect x="15" y="336" width="5.5" height="1" fill="#8f8f8f"/><rect x="15" y="342" width="5.5" height="1" fill="#8f8f8f"/><rect x="15" y="348" width="5.5" height="1" fill="#8f8f8f"/><rect x="15" y="354" width="5.5" height="1" fill="#8f8f8f"/><rect x="15" y="360" width="5.5" height="1" fill="#8f8f8f"/><rect x="15" y="366" width="5.5" height="1" fill="#8f8f8f"/><rect x="15" y="372" width="5.5" height="1" fill="#8f8f8f"/><rect x="15" y="378" width="5.5" height="1" fill="#8f8f8f"/><rect x="15" y="384" width="5.5" height="1" fill="#8f8f8f"/><rect x="0" y="397" width="20.5" height="1" fill="#8a8a8a"/><rect x="15" y="403" width="5.5" height="1" fill="#8f8f8f"/><rect x="15" y="409" width="5.5" height="1" fill="#8f8f8f"/><rect x="15" y="415" width="5.5" height="1" fill="#8f8f8f"/><rect x="15" y="421" width="5.5" height="1" fill="#8f8f8f"/><rect x="15" y="427" width="5.5" height="1" fill="#8f8f8f"/><rect x="15" y="433" width="5.5" height="1" fill="#8f8f8f"/><rect x="15" y="439" width="5.5" height="1" fill="#8f8f8f"/><rect x="15" y="445" width="5.5" height="1" fill="#8f8f8f"/><rect x="15" y="451" width="5.5" height="1" fill="#8f8f8f"/><rect x="15" y="457" width="5.5" height="1" fill="#8f8f8f"/><rect x="15" y="463" width="5.5" height="1" fill="#8f8f8f"/><rect x="15" y="469" width="5.5" height="1" fill="#8f8f8f"/><rect x="0" y="482" width="20.5" height="1" fill="#8a8a8a"/><rect x="15" y="488" width="5.5" height="1" fill="#8f8f8f"/><rect x="15" y="494" width="5.5" height="1" fill="#8f8f8f"/><rect x="15" y="500" width="5.5" height="1" fill="#8f8f8f"/><rect x="15" y="506" width="5.5" height="1" fill="#8f8f8f"/><rect x="15" y="512" width="5.5" height="1" fill="#8f8f8f"/><rect x="15" y="518" width="5.5" height="1" fill="#8f8f8f"/><rect x="15" y="524" width="5.5" height="1" fill="#8f8f8f"/><rect x="15" y="530" width="5.5" height="1" fill="#8f8f8f"/><rect x="15" y="536" width="5.5" height="1" fill="#8f8f8f"/><rect x="15" y="542" width="5.5" height="1" fill="#8f8f8f"/><rect x="15" y="548" width="5.5" height="1" fill="#8f8f8f"/><rect x="15" y="554" width="5.5" height="1" fill="#8f8f8f"/><rect x="0" y="567" width="20.5" height="1" fill="#8a8a8a"/><rect x="15" y="573" width="5.5" height="1" fill="#8f8f8f"/><rect x="15" y="579" width="5.5" height="1" fill="#8f8f8f"/><rect x="15" y="585" width="5.5" height="1" fill="#8f8f8f"/><rect x="15" y="591" width="5.5" height="1" fill="#8f8f8f"/><rect x="15" y="597" width="5.5" height="1" fill="#8f8f8f"/><rect x="15" y="603" width="5.5" height="1" fill="#8f8f8f"/><rect x="15" y="609" width="5.5" height="1" fill="#8f8f8f"/><rect x="15" y="615" width="5.5" height="1" fill="#8f8f8f"/><rect x="15" y="621" width="5.5" height="1" fill="#8f8f8f"/><rect x="15" y="627" width="5.5" height="1" fill="#8f8f8f"/><rect x="15" y="633" width="5.5" height="1" fill="#8f8f8f"/><rect x="15" y="639" width="5.5" height="1" fill="#8f8f8f"/><rect x="0" y="652" width="20.5" height="1" fill="#8a8a8a"/><rect x="15" y="658" width="5.5" height="1" fill="#8f8f8f"/><rect x="15" y="664" width="5.5" height="1" fill="#8f8f8f"/><rect x="15" y="670" width="5.5" height="1" fill="#8f8f8f"/><rect x="15" y="676" width="5.5" height="1" fill="#8f8f8f"/><rect x="15" y="682" width="5.5" height="1" fill="#8f8f8f"/><rect x="15" y="688" width="5.5" height="1" fill="#8f8f8f"/><rect x="15" y="694" width="5.5" height="1" fill="#8f8f8f"/><rect x="15" y="700" width="5.5" height="1" fill="#8f8f8f"/><rect x="15" y="706" width="5.5" height="1" fill="#8f8f8f"/><rect x="15" y="712" width="5.5" height="1" fill="#8f8f8f"/><rect x="15" y="718" width="5.5" height="1" fill="#8f8f8f"/><rect x="15" y="724" width="5.5" height="1" fill="#8f8f8f"/><rect x="0" y="738" width="20.5" height="1" fill="#8a8a8a"/><rect x="15" y="744" width="5.5" height="1" fill="#8f8f8f"/><rect x="15" y="750" width="5.5" height="1" fill="#8f8f8f"/><rect x="15" y="756" width="5.5" height="1" fill="#8f8f8f"/><rect x="15" y="762" width="5.5" height="1" fill="#8f8f8f"/><rect x="15" y="768" width="5.5" height="1" fill="#8f8f8f"/><rect x="15" y="774" width="5.5" height="1" fill="#8f8f8f"/><rect x="15" y="780" width="5.5" height="1" fill="#8f8f8f"/><rect x="15" y="786" width="5.5" height="1" fill="#8f8f8f"/><rect x="15" y="792" width="5.5" height="1" fill="#8f8f8f"/><rect x="15" y="798" width="5.5" height="1" fill="#8f8f8f"/><rect x="15" y="804" width="5.5" height="1" fill="#8f8f8f"/><rect x="15" y="810" width="5.5" height="1" fill="#8f8f8f"/><rect x="0" y="823" width="20.5" height="1" fill="#8a8a8a"/><rect x="15" y="829" width="5.5" height="1" fill="#8f8f8f"/><rect x="15" y="835" width="5.5" height="1" fill="#8f8f8f"/><rect x="15" y="841" width="5.5" height="1" fill="#8f8f8f"/><rect x="15" y="847" width="5.5" height="1" fill="#8f8f8f"/><rect x="15" y="853" width="5.5" height="1" fill="#8f8f8f"/><rect x="15" y="859" width="5.5" height="1" fill="#8f8f8f"/><rect x="15" y="865" width="5.5" height="1" fill="#8f8f8f"/><rect x="15" y="871" width="5.5" height="1" fill="#8f8f8f"/><rect x="15" y="877" width="5.5" height="1" fill="#8f8f8f"/><rect x="15" y="883" width="5.5" height="1" fill="#8f8f8f"/><rect x="15" y="889" width="5.5" height="1" fill="#8f8f8f"/><rect x="15" y="895" width="5.5" height="1" fill="#8f8f8f"/><rect x="0" y="908" width="20.5" height="1" fill="#8a8a8a"/><rect x="15" y="914" width="5.5" height="1" fill="#8f8f8f"/><rect x="15" y="920" width="5.5" height="1" fill="#8f8f8f"/><rect x="15" y="926" width="5.5" height="1" fill="#8f8f8f"/><rect x="15" y="932" width="5.5" height="1" fill="#8f8f8f"/><rect x="15" y="938" width="5.5" height="1" fill="#8f8f8f"/><rect x="15" y="944" width="5.5" height="1" fill="#8f8f8f"/><rect x="15" y="950" width="5.5" height="1" fill="#8f8f8f"/><rect x="15" y="956" width="5.5" height="1" fill="#8f8f8f"/><rect x="15" y="962" width="5.5" height="1" fill="#8f8f8f"/><rect x="15" y="968" width="5.5" height="1" fill="#8f8f8f"/><rect x="15" y="974" width="5.5" height="1" fill="#8f8f8f"/><rect x="15" y="980" width="5.5" height="1" fill="#8f8f8f"/><rect x="0" y="993" width="20.5" height="1" fill="#8a8a8a"/><path d="M1 611.5 h19.5" stroke="#fff" stroke-width="1" stroke-dasharray="1 1"/></svg>
<svg style="left:776px;top:227px;overflow:hidden" width="200" height="70" viewBox="0 0 200 70"><g transform="translate(0,0.7)"><rect x="100" y="0" width="100" height="70" fill="#dbd5ce"/><rect x="138" y="12" width="24" height="0.7" fill="#9a8f88"/><path d="M169 38.2 a6.4 8.2 0 0 1 6 8.4 h-6 z" fill="#3b2720"/><path d="M131.6 54.8 V36.9 a18.9 18.9 0 0 1 37.8 0 V54.8 Z" fill="#3b2720"/><rect x="131.6" y="56" width="37.8" height="1.1" fill="#8a7a73"/><rect x="144" y="57.6" width="12" height="0.8" fill="#9a8f88"/></g><rect x="100.5" y="0.5" width="99" height="69" fill="none" stroke="#3a3a3a" stroke-width="1"/></svg>
<div class="t" style="left:908px;top:239.50px;font-size:8.8px;line-height:8.8px;color:#0b0b0b;font-weight:bold;font-family:'Liberation Serif',serif;letter-spacing:0.363px;">Portfolio</div>
<svg style="left:776px;top:311px;overflow:hidden" width="200" height="71" viewBox="0 0 200 71"><g transform="translate(0,0.7)"><rect x="0" y="0" width="100" height="70" fill="#fff"/><rect x="3" y="3.2" width="8" height="0.9" fill="#aaa"/><rect x="91" y="3.2" width="6" height="0.9" fill="#aaa"/><rect x="9" y="14.5" width="30" height="43.5" rx="15" fill="#3b2720"/><rect x="20" y="25.2" width="8" height="0.9" fill="#b5a9a2"/><rect x="20.5" y="27.6" width="7" height="0.9" fill="#b5a9a2"/><rect x="12.5" y="30.2" width="23" height="0.9" fill="#8e7f78"/><rect x="20" y="32.4" width="8" height="0.9" fill="#9e918a"/><rect x="16" y="34.6" width="15" height="0.9" fill="#b0a49d"/><rect x="16.5" y="40.3" width="5" height="0.9" fill="#85756d"/><rect x="16.5" y="42.6" width="15" height="0.9" fill="#76665f"/><rect x="16.5" y="45.3" width="4" height="0.9" fill="#9a8c85"/><rect x="13.4" y="40.2" width="1" height="1" fill="#c9beb7"/><rect x="13.4" y="42.5" width="1" height="1" fill="#c9beb7"/><rect x="13.4" y="45.2" width="1" height="1" fill="#c9beb7"/><rect x="47.6" y="13.5" width="7" height="1.1" fill="#666"/><rect x="47.6" y="15.8" width="42" height="1.4" fill="#8b8b8b"/><rect x="47.6" y="17.6" width="12" height="1.2" fill="#9a9a9a"/><rect x="47.6" y="19" width="42.4" height="2.6" fill="#8b8b8b"/><rect x="47.6" y="21.8" width="7" height="0.9" fill="#aaa"/><rect x="47.6" y="26" width="13" height="0.9" fill="#999"/><rect x="73" y="26" width="9" height="0.9" fill="#999"/><rect x="47.6" y="28.6" width="6" height="1.2" fill="#777"/><rect x="47.6" y="30.200000000000003" width="4.6" height="1.8" fill="#a5a5a5"/><rect x="47.6" y="34.6" width="6" height="1.2" fill="#777"/><rect x="47.6" y="36.2" width="4.6" height="1.8" fill="#a5a5a5"/><rect x="47.6" y="40.8" width="6" height="1.2" fill="#777"/><rect x="47.6" y="42.4" width="4.6" height="1.8" fill="#a5a5a5"/><rect x="73" y="28.6" width="15" height="1.1" fill="#777"/><rect x="73" y="30.200000000000003" width="6.5" height="1.8" fill="#a5a5a5"/><rect x="73" y="34.6" width="15" height="1.1" fill="#777"/><rect x="73" y="36.2" width="6.5" height="1.8" fill="#a5a5a5"/><rect x="47.6" y="47.4" width="4" height="0.9" fill="#888"/><rect x="73" y="47.4" width="7" height="0.9" fill="#888"/><rect x="47.6" y="49.4" width="6" height="6.6" fill="#a9a9a9"/><rect x="72.6" y="49.6" width="15.5" height="0.9" fill="#999"/><rect x="72.6" y="51.2" width="11" height="0.9" fill="#b5b5b5"/><rect x="100" y="0" width="100" height="70" fill="#fff"/><rect x="103" y="3.2" width="8" height="0.9" fill="#aaa"/><rect x="191" y="3.2" width="6" height="0.9" fill="#aaa"/><rect x="123.6" y="18.6" width="19" height="3" fill="#6e6e6e"/><rect x="123.6" y="23.6" width="25" height="0.8" fill="#a8a8a8"/><rect x="116" y="32.8" width="3.6" height="1.8" fill="#8a8a8a"/><rect x="123.6" y="32.4" width="12" height="1.5" fill="#7a7a7a"/><rect x="123.6" y="34.4" width="7.4" height="1.5" fill="#8e8e8e"/><rect x="116" y="41.0" width="3.6" height="1.8" fill="#8a8a8a"/><rect x="123.6" y="40.6" width="12" height="1.5" fill="#7a7a7a"/><rect x="123.6" y="42.6" width="7.4" height="1.5" fill="#8e8e8e"/><rect x="116" y="49.0" width="3.6" height="1.8" fill="#8a8a8a"/><rect x="123.6" y="48.6" width="12" height="1.5" fill="#7a7a7a"/><rect x="123.6" y="50.6" width="7.4" height="1.5" fill="#8e8e8e"/><rect x="153" y="32.8" width="3.6" height="1.8" fill="#8a8a8a"/><rect x="160.6" y="32.4" width="12" height="1.5" fill="#7a7a7a"/><rect x="160.6" y="34.4" width="7.4" height="1.5" fill="#8e8e8e"/><rect x="153" y="41.0" width="3.6" height="1.8" fill="#8a8a8a"/><rect x="160.6" y="40.6" width="12" height="1.5" fill="#7a7a7a"/><rect x="160.6" y="42.6" width="7.4" height="1.5" fill="#8e8e8e"/><rect x="102.5" y="66.6" width="93" height="0.6" fill="#777"/></g><rect x="0.5" y="0.5" width="199" height="70" fill="none" stroke="#3a3a3a" stroke-width="1"/><rect x="100" y="0" width="1" height="71" fill="#3a3a3a"/></svg>
<svg style="left:776px;top:396px;overflow:hidden" width="200" height="71" viewBox="0 0 200 71"><g transform="translate(0,0.7)"><rect x="0" y="0" width="100" height="70" fill="#dbd5ce"/><rect x="3" y="3.2" width="8" height="0.9" fill="#6d6560"/><rect x="91" y="3.2" width="6" height="0.9" fill="#6d6560"/><path d="M14 56.2 V32.6 a20 20 0 0 1 40 0 V56.2 Z" fill="#3b2720"/><rect x="60.4" y="18.7" width="26.6" height="0.6" fill="#6a625c"/><rect x="82" y="18.2" width="5" height="1.4" fill="#8a837d"/><rect x="60.4" y="21" width="11.6" height="2.4" fill="#8a8580"/><rect x="60.4" y="24.4" width="8" height="2" fill="#8a8580"/><rect x="60.4" y="27.4" width="6.2" height="1.6" fill="#8f8a85"/><rect x="60.4" y="41" width="10.2" height="2" fill="#7d7873"/><rect x="60.4" y="44" width="26.6" height="8.4" fill="#8b8b8b"/><rect x="60.4" y="53.4" width="26.6" height="1.2" fill="#99948f"/><rect x="60.4" y="55.2" width="17" height="1" fill="#a39e99"/><rect x="3" y="66.6" width="94" height="0.7" fill="#5d4d45"/><rect x="49.5" y="68" width="1.2" height="0.8" fill="#777"/><rect x="100" y="0" width="100" height="70" fill="#fff"/><rect x="103" y="3.2" width="8" height="0.9" fill="#999"/><rect x="191" y="3.2" width="6" height="0.9" fill="#999"/><rect x="113" y="12.6" width="5" height="1" fill="#555"/><rect x="113" y="14.4" width="23" height="8" fill="#8e8e8e"/><rect x="113" y="22.6" width="17" height="0.9" fill="#aaa"/><rect x="113" y="27.4" width="23" height="1.2" fill="#888"/><rect x="113" y="29" width="21" height="1" fill="#aaa"/><rect x="138.4" y="12.6" width="22.8" height="17.2" fill="#d3c9be"/><rect x="163" y="12.6" width="22.9" height="17.2" fill="#d3c9be"/><rect x="113" y="33.4" width="4" height="0.8" fill="#777"/><rect x="138.4" y="33.4" width="12" height="0.8" fill="#666"/><rect x="113" y="33.9" width="72.9" height="0.4" fill="#ccc"/><rect x="113" y="35.2" width="23" height="26.1" fill="#d3c9be"/><rect x="138.4" y="35.2" width="47.5" height="26.1" fill="#d3c9be"/><rect x="103" y="66.6" width="94" height="0.6" fill="#8a8a8a"/><rect x="149.5" y="68" width="1.2" height="0.8" fill="#777"/></g><rect x="0.5" y="0.5" width="199" height="70" fill="none" stroke="#3a3a3a" stroke-width="1"/><rect x="100" y="0" width="1" height="71" fill="#3a3a3a"/></svg>
<svg style="left:776px;top:481px;overflow:hidden" width="200" height="71" viewBox="0 0 200 71"><g transform="translate(0,0.7)"><rect x="0" y="0" width="100" height="70" fill="#fff"/><rect x="3" y="3.2" width="8" height="0.9" fill="#999"/><rect x="91" y="3.2" width="6" height="0.9" fill="#999"/><rect x="7.3" y="13.7" width="41.6" height="23.3" fill="#fff" stroke="#d4d4d4" stroke-width="0.5"/><rect x="7.3" y="13.4" width="41.6" height="0.5" fill="#aaa"/><rect x="7.3" y="13" width="7" height="1.1" fill="#888"/><rect x="7.3" y="41" width="41.6" height="19" fill="#fff" stroke="#d4d4d4" stroke-width="0.5"/><rect x="7.3" y="40.7" width="41.6" height="0.5" fill="#aaa"/><rect x="7.3" y="40.3" width="4.5" height="1.1" fill="#999"/><rect x="7.3" y="57.6" width="41.6" height="2.6" fill="#2a211d"/><rect x="51.9" y="13.7" width="41.6" height="23.3" fill="#fff" stroke="#d4d4d4" stroke-width="0.5"/><rect x="51.9" y="13.4" width="41.6" height="0.5" fill="#aaa"/><rect x="51.9" y="13" width="7" height="1.1" fill="#888"/><rect x="51.9" y="41" width="41.6" height="19" fill="#fff" stroke="#d4d4d4" stroke-width="0.5"/><rect x="51.9" y="40.7" width="41.6" height="0.5" fill="#aaa"/><rect x="51.9" y="40.3" width="4.5" height="1.1" fill="#999"/><rect x="51.9" y="57.6" width="41.6" height="2.6" fill="#2a211d"/><rect x="3" y="66.6" width="94" height="0.6" fill="#8a8a8a"/><rect x="49.5" y="68" width="1.2" height="0.8" fill="#777"/><rect x="100" y="0" width="100" height="70" fill="#dbd5ce"/><rect x="103" y="3.2" width="8" height="0.9" fill="#5b504a"/><rect x="191" y="3.2" width="6" height="0.9" fill="#5b504a"/><rect x="106.4" y="13.2" width="41.8" height="0.5" fill="#8d837c"/><rect x="106.4" y="12.8" width="5" height="1" fill="#7c716a"/><rect x="106.4" y="15" width="41.8" height="20.3" fill="#3b2720"/><rect x="106.4" y="37.8" width="41.8" height="0.5" fill="#8d837c"/><rect x="106.4" y="37.4" width="5" height="1" fill="#7c716a"/><rect x="106.4" y="39.6" width="41.8" height="20.4" fill="#3b2720"/><rect x="151" y="13.2" width="41.8" height="0.5" fill="#8d837c"/><rect x="151" y="12.8" width="5" height="1" fill="#7c716a"/><rect x="151" y="15" width="41.8" height="20.3" fill="#3b2720"/><rect x="151" y="37.8" width="41.8" height="0.5" fill="#8d837c"/><rect x="151" y="37.4" width="5" height="1" fill="#7c716a"/><rect x="151" y="39.6" width="41.8" height="20.4" fill="#3b2720"/><rect x="103" y="66.6" width="94" height="1.0" fill="#5d4d45"/><rect x="149.5" y="68" width="1.2" height="0.8" fill="#777"/></g><rect x="0.5" y="0.5" width="199" height="70" fill="none" stroke="#3a3a3a" stroke-width="1"/><rect x="100" y="0" width="1" height="71" fill="#3a3a3a"/></svg>
<svg style="left:776px;top:566px;overflow:hidden" width="200" height="71" viewBox="0 0 200 71"><g transform="translate(0,0.7)"><rect x="0" y="0" width="100" height="70" fill="#dbd5ce"/><rect x="3" y="3.2" width="8" height="0.9" fill="#6d6560"/><rect x="91" y="3.2" width="6" height="0.9" fill="#6d6560"/><path d="M14 56.2 V32.6 a20 20 0 0 1 40 0 V56.2 Z" fill="#3b2720"/><rect x="60.4" y="18.7" width="26.6" height="0.6" fill="#6a625c"/><rect x="82" y="18.2" width="5" height="1.4" fill="#8a837d"/><rect x="60.4" y="21" width="11.6" height="2.4" fill="#8a8580"/><rect x="60.4" y="24.4" width="8" height="2" fill="#8a8580"/><rect x="60.4" y="27.4" width="6.2" height="1.6" fill="#8f8a85"/><rect x="60.4" y="41" width="10.2" height="2" fill="#7d7873"/><rect x="60.4" y="44" width="26.6" height="8.4" fill="#8b8b8b"/><rect x="60.4" y="53.4" width="26.6" height="1.2" fill="#99948f"/><rect x="60.4" y="55.2" width="17" height="1" fill="#a39e99"/><rect x="3" y="66.6" width="94" height="0.7" fill="#5d4d45"/><rect x="49.5" y="68" width="1.2" height="0.8" fill="#777"/><rect x="100" y="0" width="100" height="70" fill="#fff"/><rect x="103" y="3.2" width="8" height="0.9" fill="#999"/><rect x="191" y="3.2" width="6" height="0.9" fill="#999"/><rect x="113" y="12.6" width="5" height="1" fill="#555"/><rect x="113" y="14.4" width="23" height="8" fill="#8e8e8e"/><rect x="113" y="22.6" width="17" height="0.9" fill="#aaa"/><rect x="113" y="27.4" width="23" height="1.2" fill="#888"/><rect x="113" y="29" width="21" height="1" fill="#aaa"/><rect x="138.4" y="12.6" width="22.8" height="17.2" fill="#d3c9be"/><rect x="163" y="12.6" width="22.9" height="17.2" fill="#d3c9be"/><rect x="113" y="33.4" width="4" height="0.8" fill="#777"/><rect x="138.4" y="33.4" width="12" height="0.8" fill="#666"/><rect x="113" y="33.9" width="72.9" height="0.4" fill="#ccc"/><rect x="113" y="35.2" width="23" height="26.1" fill="#d3c9be"/><rect x="138.4" y="35.2" width="47.5" height="26.1" fill="#d3c9be"/><rect x="103" y="66.6" width="94" height="0.6" fill="#8a8a8a"/><rect x="149.5" y="68" width="1.2" height="0.8" fill="#777"/></g><rect x="0.5" y="0.5" width="199" height="70" fill="none" stroke="#3a3a3a" stroke-width="1"/><rect x="100" y="0" width="1" height="71" fill="#3a3a3a"/></svg>
<svg style="left:776px;top:651px;overflow:hidden" width="200" height="71" viewBox="0 0 200 71"><g transform="translate(0,0.7)"><rect x="0" y="0" width="100" height="70" fill="#fff"/><rect x="3" y="3.2" width="8" height="0.9" fill="#999"/><rect x="91" y="3.2" width="6" height="0.9" fill="#999"/><rect x="7.3" y="13.7" width="41.6" height="23.3" fill="#fff" stroke="#d4d4d4" stroke-width="0.5"/><rect x="7.3" y="13.4" width="41.6" height="0.5" fill="#aaa"/><rect x="7.3" y="13" width="7" height="1.1" fill="#888"/><rect x="7.3" y="41" width="41.6" height="19" fill="#fff" stroke="#d4d4d4" stroke-width="0.5"/><rect x="7.3" y="40.7" width="41.6" height="0.5" fill="#aaa"/><rect x="7.3" y="40.3" width="4.5" height="1.1" fill="#999"/><rect x="7.3" y="57.6" width="41.6" height="2.6" fill="#2a211d"/><rect x="51.9" y="13.7" width="41.6" height="23.3" fill="#fff" stroke="#d4d4d4" stroke-width="0.5"/><rect x="51.9" y="13.4" width="41.6" height="0.5" fill="#aaa"/><rect x="51.9" y="13" width="7" height="1.1" fill="#888"/><rect x="51.9" y="41" width="41.6" height="19" fill="#fff" stroke="#d4d4d4" stroke-width="0.5"/><rect x="51.9" y="40.7" width="41.6" height="0.5" fill="#aaa"/><rect x="51.9" y="40.3" width="4.5" height="1.1" fill="#999"/><rect x="51.9" y="57.6" width="41.6" height="2.6" fill="#2a211d"/><rect x="3" y="66.6" width="94" height="0.6" fill="#8a8a8a"/><rect x="49.5" y="68" width="1.2" height="0.8" fill="#777"/><rect x="100" y="0" width="100" height="70" fill="#dbd5ce"/><rect x="103" y="3.2" width="8" height="0.9" fill="#5b504a"/><rect x="191" y="3.2" width="6" height="0.9" fill="#5b504a"/><rect x="106.4" y="13.2" width="41.8" height="0.5" fill="#8d837c"/><rect x="106.4" y="12.8" width="5" height="1" fill="#7c716a"/><rect x="106.4" y="15" width="41.8" height="20.3" fill="#3b2720"/><rect x="106.4" y="37.8" width="41.8" height="0.5" fill="#8d837c"/><rect x="106.4" y="37.4" width="5" height="1" fill="#7c716a"/><rect x="106.4" y="39.6" width="41.8" height="20.4" fill="#3b2720"/><rect x="151" y="13.2" width="41.8" height="0.5" fill="#8d837c"/><rect x="151" y="12.8" width="5" height="1" fill="#7c716a"/><rect x="151" y="15" width="41.8" height="20.3" fill="#3b2720"/><rect x="151" y="37.8" width="41.8" height="0.5" fill="#8d837c"/><rect x="151" y="37.4" width="5" height="1" fill="#7c716a"/><rect x="151" y="39.6" width="41.8" height="20.4" fill="#3b2720"/><rect x="103" y="66.6" width="94" height="1.0" fill="#5d4d45"/><rect x="149.5" y="68" width="1.2" height="0.8" fill="#777"/></g><rect x="0.5" y="0.5" width="199" height="70" fill="none" stroke="#3a3a3a" stroke-width="1"/><rect x="100" y="0" width="1" height="71" fill="#3a3a3a"/></svg>
<svg style="left:776px;top:737px;overflow:hidden" width="200" height="71" viewBox="0 0 200 71"><g transform="translate(0,0.7)"><rect x="0" y="0" width="100" height="70" fill="#dbd5ce"/><rect x="3" y="3.2" width="8" height="0.9" fill="#6d6560"/><rect x="91" y="3.2" width="6" height="0.9" fill="#6d6560"/><path d="M14 56.2 V32.6 a20 20 0 0 1 40 0 V56.2 Z" fill="#3b2720"/><rect x="60.4" y="18.7" width="26.6" height="0.6" fill="#6a625c"/><rect x="82" y="18.2" width="5" height="1.4" fill="#8a837d"/><rect x="60.4" y="21" width="11.6" height="2.4" fill="#8a8580"/><rect x="60.4" y="24.4" width="8" height="2" fill="#8a8580"/><rect x="60.4" y="27.4" width="6.2" height="1.6" fill="#8f8a85"/><rect x="60.4" y="41" width="10.2" height="2" fill="#7d7873"/><rect x="60.4" y="44" width="26.6" height="8.4" fill="#8b8b8b"/><rect x="60.4" y="53.4" width="26.6" height="1.2" fill="#99948f"/><rect x="60.4" y="55.2" width="17" height="1" fill="#a39e99"/><rect x="3" y="66.6" width="94" height="0.7" fill="#5d4d45"/><rect x="49.5" y="68" width="1.2" height="0.8" fill="#777"/><rect x="100" y="0" width="100" height="70" fill="#fff"/><rect x="103" y="3.2" width="8" height="0.9" fill="#999"/><rect x="191" y="3.2" width="6" height="0.9" fill="#999"/><rect x="113" y="12.6" width="5" height="1" fill="#555"/><rect x="113" y="14.4" width="23" height="8" fill="#8e8e8e"/><rect x="113" y="22.6" width="17" height="0.9" fill="#aaa"/><rect x="113" y="27.4" width="23" height="1.2" fill="#888"/><rect x="113" y="29" width="21" height="1" fill="#aaa"/><rect x="138.4" y="12.6" width="22.8" height="17.2" fill="#d3c9be"/><rect x="163" y="12.6" width="22.9" height="17.2" fill="#d3c9be"/><rect x="113" y="33.4" width="4" height="0.8" fill="#777"/><rect x="138.4" y="33.4" width="12" height="0.8" fill="#666"/><rect x="113" y="33.9" width="72.9" height="0.4" fill="#ccc"/><rect x="113" y="35.2" width="23" height="26.1" fill="#d3c9be"/><rect x="138.4" y="35.2" width="47.5" height="26.1" fill="#d3c9be"/><rect x="103" y="66.6" width="94" height="0.6" fill="#8a8a8a"/><rect x="149.5" y="68" width="1.2" height="0.8" fill="#777"/></g><rect x="0.5" y="0.5" width="199" height="70" fill="none" stroke="#3a3a3a" stroke-width="1"/><rect x="100" y="0" width="1" height="71" fill="#3a3a3a"/></svg>
<svg style="left:776px;top:822px;overflow:hidden" width="200" height="71" viewBox="0 0 200 71"><g transform="translate(0,0.7)"><rect x="0" y="0" width="100" height="70" fill="#fff"/><rect x="3" y="3.2" width="8" height="0.9" fill="#999"/><rect x="91" y="3.2" width="6" height="0.9" fill="#999"/><rect x="7.3" y="13.7" width="41.6" height="23.3" fill="#fff" stroke="#d4d4d4" stroke-width="0.5"/><rect x="7.3" y="13.4" width="41.6" height="0.5" fill="#aaa"/><rect x="7.3" y="13" width="7" height="1.1" fill="#888"/><rect x="7.3" y="41" width="41.6" height="19" fill="#fff" stroke="#d4d4d4" stroke-width="0.5"/><rect x="7.3" y="40.7" width="41.6" height="0.5" fill="#aaa"/><rect x="7.3" y="40.3" width="4.5" height="1.1" fill="#999"/><rect x="7.3" y="57.6" width="41.6" height="2.6" fill="#2a211d"/><rect x="51.9" y="13.7" width="41.6" height="23.3" fill="#fff" stroke="#d4d4d4" stroke-width="0.5"/><rect x="51.9" y="13.4" width="41.6" height="0.5" fill="#aaa"/><rect x="51.9" y="13" width="7" height="1.1" fill="#888"/><rect x="51.9" y="41" width="41.6" height="19" fill="#fff" stroke="#d4d4d4" stroke-width="0.5"/><rect x="51.9" y="40.7" width="41.6" height="0.5" fill="#aaa"/><rect x="51.9" y="40.3" width="4.5" height="1.1" fill="#999"/><rect x="51.9" y="57.6" width="41.6" height="2.6" fill="#2a211d"/><rect x="3" y="66.6" width="94" height="0.6" fill="#8a8a8a"/><rect x="49.5" y="68" width="1.2" height="0.8" fill="#777"/><rect x="100" y="0" width="100" height="70" fill="#dbd5ce"/><rect x="103" y="3.2" width="8" height="0.9" fill="#5b504a"/><rect x="191" y="3.2" width="6" height="0.9" fill="#5b504a"/><rect x="106.4" y="13.2" width="41.8" height="0.5" fill="#8d837c"/><rect x="106.4" y="12.8" width="5" height="1" fill="#7c716a"/><rect x="106.4" y="15" width="41.8" height="20.3" fill="#3b2720"/><rect x="106.4" y="37.8" width="41.8" height="0.5" fill="#8d837c"/><rect x="106.4" y="37.4" width="5" height="1" fill="#7c716a"/><rect x="106.4" y="39.6" width="41.8" height="20.4" fill="#3b2720"/><rect x="151" y="13.2" width="41.8" height="0.5" fill="#8d837c"/><rect x="151" y="12.8" width="5" height="1" fill="#7c716a"/><rect x="151" y="15" width="41.8" height="20.3" fill="#3b2720"/><rect x="151" y="37.8" width="41.8" height="0.5" fill="#8d837c"/><rect x="151" y="37.4" width="5" height="1" fill="#7c716a"/><rect x="151" y="39.6" width="41.8" height="20.4" fill="#3b2720"/><rect x="103" y="66.6" width="94" height="1.0" fill="#5d4d45"/><rect x="149.5" y="68" width="1.2" height="0.8" fill="#777"/></g><rect x="0.5" y="0.5" width="199" height="70" fill="none" stroke="#3a3a3a" stroke-width="1"/><rect x="100" y="0" width="1" height="71" fill="#3a3a3a"/></svg>
<svg style="left:776px;top:907px;overflow:hidden" width="200" height="71" viewBox="0 0 200 71"><g transform="translate(0,0.7)"><rect x="0" y="0" width="100" height="70" fill="#dbd5ce"/><rect x="3" y="3.2" width="8" height="0.9" fill="#6d6560"/><rect x="91" y="3.2" width="6" height="0.9" fill="#6d6560"/><path d="M14 56.2 V32.6 a20 20 0 0 1 40 0 V56.2 Z" fill="#3b2720"/><rect x="60.4" y="18.7" width="26.6" height="0.6" fill="#6a625c"/><rect x="82" y="18.2" width="5" height="1.4" fill="#8a837d"/><rect x="60.4" y="21" width="11.6" height="2.4" fill="#8a8580"/><rect x="60.4" y="24.4" width="8" height="2" fill="#8a8580"/><rect x="60.4" y="27.4" width="6.2" height="1.6" fill="#8f8a85"/><rect x="60.4" y="41" width="10.2" height="2" fill="#7d7873"/><rect x="60.4" y="44" width="26.6" height="8.4" fill="#8b8b8b"/><rect x="60.4" y="53.4" width="26.6" height="1.2" fill="#99948f"/><rect x="60.4" y="55.2" width="17" height="1" fill="#a39e99"/><rect x="3" y="66.6" width="94" height="0.7" fill="#5d4d45"/><rect x="49.5" y="68" width="1.2" height="0.8" fill="#777"/><rect x="100" y="0" width="100" height="70" fill="#fff"/><rect x="103" y="3.2" width="8" height="0.9" fill="#999"/><rect x="191" y="3.2" width="6" height="0.9" fill="#999"/><rect x="113" y="12.6" width="5" height="1" fill="#555"/><rect x="113" y="14.4" width="23" height="8" fill="#8e8e8e"/><rect x="113" y="22.6" width="17" height="0.9" fill="#aaa"/><rect x="113" y="27.4" width="23" height="1.2" fill="#888"/><rect x="113" y="29" width="21" height="1" fill="#aaa"/><rect x="138.4" y="12.6" width="22.8" height="17.2" fill="#d3c9be"/><rect x="163" y="12.6" width="22.9" height="17.2" fill="#d3c9be"/><rect x="113" y="33.4" width="4" height="0.8" fill="#777"/><rect x="138.4" y="33.4" width="12" height="0.8" fill="#666"/><rect x="113" y="33.9" width="72.9" height="0.4" fill="#ccc"/><rect x="113" y="35.2" width="23" height="26.1" fill="#d3c9be"/><rect x="138.4" y="35.2" width="47.5" height="26.1" fill="#d3c9be"/><rect x="103" y="66.6" width="94" height="0.6" fill="#8a8a8a"/><rect x="149.5" y="68" width="1.2" height="0.8" fill="#777"/></g><rect x="0.5" y="0.5" width="199" height="70" fill="none" stroke="#3a3a3a" stroke-width="1"/><rect x="100" y="0" width="1" height="71" fill="#3a3a3a"/></svg>
<svg style="left:776px;top:992px;overflow:hidden" width="200" height="71" viewBox="0 0 200 71"><g transform="translate(0,0.7)"><rect x="0" y="0" width="100" height="70" fill="#fff"/><rect x="3" y="3.2" width="8" height="0.9" fill="#999"/><rect x="91" y="3.2" width="6" height="0.9" fill="#999"/><rect x="7.3" y="13.7" width="41.6" height="23.3" fill="#fff" stroke="#d4d4d4" stroke-width="0.5"/><rect x="7.3" y="13.4" width="41.6" height="0.5" fill="#aaa"/><rect x="7.3" y="13" width="7" height="1.1" fill="#888"/><rect x="7.3" y="41" width="41.6" height="19" fill="#fff" stroke="#d4d4d4" stroke-width="0.5"/><rect x="7.3" y="40.7" width="41.6" height="0.5" fill="#aaa"/><rect x="7.3" y="40.3" width="4.5" height="1.1" fill="#999"/><rect x="7.3" y="57.6" width="41.6" height="2.6" fill="#2a211d"/><rect x="51.9" y="13.7" width="41.6" height="23.3" fill="#fff" stroke="#d4d4d4" stroke-width="0.5"/><rect x="51.9" y="13.4" width="41.6" height="0.5" fill="#aaa"/><rect x="51.9" y="13" width="7" height="1.1" fill="#888"/><rect x="51.9" y="41" width="41.6" height="19" fill="#fff" stroke="#d4d4d4" stroke-width="0.5"/><rect x="51.9" y="40.7" width="41.6" height="0.5" fill="#aaa"/><rect x="51.9" y="40.3" width="4.5" height="1.1" fill="#999"/><rect x="51.9" y="57.6" width="41.6" height="2.6" fill="#2a211d"/><rect x="3" y="66.6" width="94" height="0.6" fill="#8a8a8a"/><rect x="49.5" y="68" width="1.2" height="0.8" fill="#777"/><rect x="100" y="0" width="100" height="70" fill="#dbd5ce"/><rect x="103" y="3.2" width="8" height="0.9" fill="#5b504a"/><rect x="191" y="3.2" width="6" height="0.9" fill="#5b504a"/><rect x="106.4" y="13.2" width="41.8" height="0.5" fill="#8d837c"/><rect x="106.4" y="12.8" width="5" height="1" fill="#7c716a"/><rect x="106.4" y="15" width="41.8" height="20.3" fill="#3b2720"/><rect x="106.4" y="37.8" width="41.8" height="0.5" fill="#8d837c"/><rect x="106.4" y="37.4" width="5" height="1" fill="#7c716a"/><rect x="106.4" y="39.6" width="41.8" height="20.4" fill="#3b2720"/><rect x="151" y="13.2" width="41.8" height="0.5" fill="#8d837c"/><rect x="151" y="12.8" width="5" height="1" fill="#7c716a"/><rect x="151" y="15" width="41.8" height="20.3" fill="#3b2720"/><rect x="151" y="37.8" width="41.8" height="0.5" fill="#8d837c"/><rect x="151" y="37.4" width="5" height="1" fill="#7c716a"/><rect x="151" y="39.6" width="41.8" height="20.4" fill="#3b2720"/><rect x="103" y="66.6" width="94" height="1.0" fill="#5d4d45"/><rect x="149.5" y="68" width="1.2" height="0.8" fill="#777"/></g><rect x="0.5" y="0.5" width="199" height="70" fill="none" stroke="#3a3a3a" stroke-width="1"/><rect x="100" y="0" width="1" height="71" fill="#3a3a3a"/></svg>
<div style="left:1731px;top:175px;width:20px;height:823px;background:#4b4b4b;"></div>
<div style="left:1749.5px;top:175px;width:1.5px;height:823px;background:#424242;"></div>
<svg style="left:1731px;top:980px" width="20" height="18" viewBox="0 0 20 18"><path d="M5.0 7.75 L9.5 12.25 L14.0 7.75" fill="none" stroke="#9a9a9a" stroke-width="1.3" stroke-linecap="round" stroke-linejoin="round"/></svg>
<div style="left:30px;top:175px;width:90px;height:560px;background:#535353;border-radius:4px 4px 0 0;box-shadow:inset -1px -1px 0 #3f3f3f, inset 1px 0 0 #474747;"></div>
<div style="left:30px;top:175px;width:90px;height:16px;background:#484848;border-radius:4px 4px 0 0;"></div>
<div style="left:30px;top:191px;width:90px;height:1px;background:#414141;"></div>
<svg style="left:30px;top:175px" width="92" height="562" viewBox="30 175 92 562"><path d="M86.2 180 l-3.4 3 l3.4 3 z M90.8 180 l-3.4 3 l3.4 3 z" fill="#d0d0d0"/><path d="M105.5 179 L113 187 M113 179 L105.5 187" stroke="#d6d6d6" stroke-width="1.6"/><rect x="62.5" y="195.5" width="1.3" height="4.5" fill="#3c3c3c"/><rect x="65.7" y="195.5" width="1.3" height="4.5" fill="#3c3c3c"/><rect x="68.9" y="195.5" width="1.3" height="4.5" fill="#3c3c3c"/><rect x="72.1" y="195.5" width="1.3" height="4.5" fill="#3c3c3c"/><rect x="75.3" y="195.5" width="1.3" height="4.5" fill="#3c3c3c"/><rect x="78.5" y="195.5" width="1.3" height="4.5" fill="#3c3c3c"/><rect x="81.7" y="195.5" width="1.3" height="4.5" fill="#3c3c3c"/><rect x="84.9" y="195.5" width="1.3" height="4.5" fill="#3c3c3c"/><rect x="39" y="210.7" width="34.3" height="27.1" rx="3" fill="#2a2a2a"/><path d="M50.3 215.3 L50.3 234.6 L55.2 229.6 L64.8 228.8 Z" fill="none" stroke="#c9c9c9" stroke-width="1.5" stroke-linejoin="round"/><path d="M88 214.6 L88 235.4 L93 229.6 L103 228.4 Z" fill="#c9c9c9"/><path d="M49 245 h9.5 l5 5 v3.5 M49 245 v18 h8" fill="none" stroke="#c9c9c9" stroke-width="1.5"/><path d="M58.5 245 v5 h5" fill="none" stroke="#c9c9c9" stroke-width="1.2"/><path d="M60.2 255.2 v9.5 l2.6 -2.6 l4.6 -0.8 z" fill="#c9c9c9"/><path d="M83.2 245 v19 M105 245 v19" stroke="#c9c9c9" stroke-width="1.8"/><path d="M89 254.5 h10" stroke="#c9c9c9" stroke-width="1.4"/><path d="M86 254.5 l4 -3 v6 z M102.2 254.5 l-4 -3 v6 z" fill="#c9c9c9"/><path d="M47.4 282 v12.5 h17.6 v-12.5" fill="none" stroke="#c9c9c9" stroke-width="2.1"/><path d="M50.4 284.5 h11.6" stroke="#c9c9c9" stroke-width="1.6"/><rect x="50.6" y="287.3" width="2.8" height="2.3" fill="#c9c9c9"/><rect x="50.6" y="290.8" width="2.8" height="2.1" fill="#c9c9c9"/><rect x="54.800000000000004" y="287.3" width="2.8" height="2.3" fill="#c9c9c9"/><rect x="54.800000000000004" y="290.8" width="2.8" height="2.1" fill="#c9c9c9"/><rect x="59.0" y="287.3" width="2.8" height="2.3" fill="#c9c9c9"/><rect x="59.0" y="290.8" width="2.8" height="2.1" fill="#c9c9c9"/><path d="M50 274.5 L56 280.5" stroke="#c9c9c9" stroke-width="1.6"/><path d="M57.5 276.2 v5.8 h-5.8 z" fill="#c9c9c9"/><path d="M85 282 v12.5 h17.6 v-12.5" fill="none" stroke="#c9c9c9" stroke-width="2.1"/><path d="M88 284.5 h11.6" stroke="#c9c9c9" stroke-width="1.6"/><rect x="88.2" y="287.3" width="2.8" height="2.3" fill="#c9c9c9"/><rect x="88.2" y="290.8" width="2.8" height="2.1" fill="#c9c9c9"/><rect x="92.4" y="287.3" width="2.8" height="2.3" fill="#c9c9c9"/><rect x="92.4" y="290.8" width="2.8" height="2.1" fill="#c9c9c9"/><rect x="96.60000000000001" y="287.3" width="2.8" height="2.3" fill="#c9c9c9"/><rect x="96.60000000000001" y="290.8" width="2.8" height="2.1" fill="#c9c9c9"/><path d="M95 281.5 L101 275.5" stroke="#c9c9c9" stroke-width="1.6"/><path d="M96.8 274 h5.8 v5.8 z" fill="#c9c9c9"/><path d="M47.4 309.2 h18.4 v4.6 h-1.6 v-2.6 h-5.8 v13.8 h2.8 v1.9 h-9.2 v-1.9 h2.8 v-13.8 h-5.8 v2.6 h-1.6 z" fill="#c9c9c9"/><path d="M72 330 v-3.4 l-3.4 3.4 z" fill="#d8d8d8"/><path d="M84.8 327 L102.8 309.2" stroke="#c9c9c9" stroke-width="1.7" stroke-linecap="round"/><path d="M43.3 342.5 h8.5" stroke="#c9c9c9" stroke-width="2"/><g transform="translate(48.6,357.6) rotate(-45)"><path d="M0 0 L5 -4.2 L13.5 -3.6 L16 -1.6 V1.6 L13.5 3.6 L5 4.2 Z" fill="#c9c9c9"/><rect x="17.2" y="-4" width="5.6" height="8" rx="1" fill="#c9c9c9"/><path d="M1 0 H9" stroke="#535353" stroke-width="1.1"/><circle cx="9.6" cy="0" r="1.3" fill="#535353"/></g><path d="M72 359.5 v-3.4 l-3.4 3.4 z" fill="#d8d8d8"/><g transform="translate(84.6,357.8) rotate(-45)"><path d="M0 0 L5.6 -3.5 H17 V3.5 H5.6 Z" fill="#c9c9c9"/><rect x="18.4" y="-3.5" width="5" height="7" rx="1.2" fill="#c9c9c9"/><path d="M1.6 0 L4.6 -1.6 V1.6 Z" fill="#535353"/></g><path d="M109.5 359.5 v-3.4 l-3.4 3.4 z" fill="#d8d8d8"/><rect x="46.8" y="370.3" width="19" height="16" fill="none" stroke="#c9c9c9" stroke-width="1.5"/><path d="M46.8 370.3 L65.8 386.3 M65.8 370.3 L46.8 386.3" stroke="#c9c9c9" stroke-width="1.2"/><path d="M72 389 v-3.4 l-3.4 3.4 z" fill="#d8d8d8"/><rect x="84.8" y="370.3" width="19" height="16" fill="#6f6f6f" stroke="#c9c9c9" stroke-width="1.5"/><path d="M109.5 389 v-3.4 l-3.4 3.4 z" fill="#d8d8d8"/><rect x="40" y="393.4" width="72" height="1" fill="#4a4a4a"/><g fill="none" stroke="#c9c9c9" stroke-width="1.7" stroke-linecap="round"><path d="M46.5 406 L61.2 415.2 M46.5 416.8 L61 407.6"/><circle cx="64" cy="405.6" r="2.6"/><circle cx="64" cy="418.4" r="2.6"/></g><rect x="91" y="404" width="14" height="15.5" fill="none" stroke="#c9c9c9" stroke-width="1.3" stroke-dasharray="2.4 1.6"/><rect x="89.8" y="402.8" width="2.6" height="2.6" fill="#c9c9c9"/><rect x="103.8" y="402.8" width="2.6" height="2.6" fill="#c9c9c9"/><rect x="103.8" y="418.2" width="2.6" height="2.6" fill="#c9c9c9"/><rect x="89.8" y="418.2" width="2.6" height="2.6" fill="#c9c9c9"/><rect x="103.8" y="410.5" width="2.6" height="2.6" fill="#c9c9c9"/><rect x="97" y="418.2" width="2.6" height="2.6" fill="#c9c9c9"/><path d="M82.4 401.6 V418.2 L86.6 413.2 L94 412.6 Z" fill="#c9c9c9"/><path d="M109.5 422.5 v-3.4 l-3.4 3.4 z" fill="#d8d8d8"/><defs><linearGradient id="g1" x1="0" x2="1"><stop offset="0" stop-color="#333"/><stop offset="1" stop-color="#bdbdbd"/></linearGradient><linearGradient id="g2" x1="0" x2="0" y1="0" y2="1"><stop offset="0" stop-color="#a5a5a5" stop-opacity="0.9"/><stop offset="1" stop-color="#2e2e2e"/></linearGradient><linearGradient id="g3" x1="0" x2="1"><stop offset="0" stop-color="#fff"/><stop offset="1" stop-color="#111"/></linearGradient></defs><rect x="46.8" y="433.5" width="19" height="16.5" fill="url(#g1)" stroke="#c9c9c9" stroke-width="1.5"/><rect x="84.8" y="433.5" width="19" height="16.5" fill="#9c9c9c"/><rect x="85.5" y="434.2" width="3" height="3.1" fill="#6a6a6a"/><rect x="85.5" y="440.4" width="3" height="3.1" fill="#6a6a6a"/><rect x="85.5" y="446.6" width="3" height="3.1" fill="#6a6a6a"/><rect x="88.5" y="437.3" width="3" height="3.1" fill="#6a6a6a"/><rect x="88.5" y="443.5" width="3" height="3.1" fill="#6a6a6a"/><rect x="91.5" y="434.2" width="3" height="3.1" fill="#6a6a6a"/><rect x="91.5" y="440.4" width="3" height="3.1" fill="#6a6a6a"/><rect x="91.5" y="446.6" width="3" height="3.1" fill="#6a6a6a"/><rect x="94.5" y="437.3" width="3" height="3.1" fill="#6a6a6a"/><rect x="94.5" y="443.5" width="3" height="3.1" fill="#6a6a6a"/><rect x="97.5" y="434.2" width="3" height="3.1" fill="#6a6a6a"/><rect x="97.5" y="440.4" width="3" height="3.1" fill="#6a6a6a"/><rect x="97.5" y="446.6" width="3" height="3.1" fill="#6a6a6a"/><rect x="100.5" y="437.3" width="3" height="3.1" fill="#6a6a6a"/><rect x="100.5" y="443.5" width="3" height="3.1" fill="#6a6a6a"/><rect x="84.8" y="433.5" width="19" height="16.5" fill="url(#g2)" stroke="#c9c9c9" stroke-width="1.5"/><rect x="40" y="458" width="72" height="1" fill="#4a4a4a"/><path d="M47.4 467 h18.4 v11.5 l-6 6 h-12.4 z" fill="#c9c9c9"/><path d="M50.5 471.3 h12 M50.5 474.6 h12 M50.5 477.9 h5" stroke="#535353" stroke-width="1.3"/><path d="M60 484.5 v-5.8 h5.8" fill="#535353" stroke="#c9c9c9" stroke-width="1"/><g transform="translate(85.2,486.2) rotate(-45)"><path d="M0 -1.5 a1.6 1.6 0 0 0 0 3.2 L3 2.4 L14.5 2.4 V-2.4 L3 -2.4 Z" fill="none" stroke="#c9c9c9" stroke-width="1.4"/><rect x="13.2" y="-4.2" width="3" height="8.4" fill="#c9c9c9"/><rect x="16" y="-2.6" width="6.5" height="5.2" rx="2.2" fill="#c9c9c9"/></g><rect x="94.6" y="481.6" width="12.4" height="4.2" fill="none" stroke="#c9c9c9" stroke-width="1.1"/><path d="M97.7 481.6 v4.2 M100.8 481.6 v4.2 M103.9 481.6 v4.2" stroke="#c9c9c9" stroke-width="1"/><path d="M109.5 489.5 v-3.4 l-3.4 3.4 z" fill="#d8d8d8"/><g transform="translate(46.2,496)"><path d="M6.2 19.8 C4.2 17.2 2.2 13.4 0.2 10.2 C-0.2 9 1.2 8.2 2.2 9.2 L5.4 12.6 L4.4 3.6 C4.3 2.2 6.2 2 6.5 3.4 L8 10 L8.3 1.4 C8.4 -0.1 10.5 -0.1 10.6 1.4 L11 10 L13 2.4 C13.4 1 15.3 1.5 15.1 2.9 L14 11 L17.2 5.8 C18 4.6 19.7 5.5 19.1 6.8 C17.8 10 16.4 13.5 15.4 16.2 C14.9 17.6 14.4 18.8 13.8 19.8 Z" fill="#c9c9c9"/></g><circle cx="91.6" cy="503.3" r="7.2" fill="none" stroke="#c9c9c9" stroke-width="1.5"/><path d="M97 508.7 L103.2 514.8" stroke="#c9c9c9" stroke-width="2.3" stroke-linecap="round"/><rect x="40" y="522.6" width="72" height="1" fill="#4e4e4e"/><path d="M102.2 531.6 h3 a3.6 3.6 0 0 1 3.6 3.6 v4" fill="none" stroke="#c9c9c9" stroke-width="2"/><path d="M98.4 531.6 l4.4 -3.6 v7.2 z M108.8 543.2 l-3.6 -4.4 h7.2 z" fill="#c9c9c9"/><rect x="66" y="551.3" width="41.3" height="41.4" fill="#fff"/><rect x="76.6" y="561.4" width="20.4" height="20.6" fill="#555"/><path d="M68 590.6 L105.6 553.2" stroke="#d2141c" stroke-width="4"/><rect x="42.3" y="527.2" width="43.6" height="43.4" fill="#d1c9bd" stroke="#fff" stroke-width="1.2"/><rect x="49.4" y="583.4" width="8.4" height="8.4" fill="#111" stroke="#cfcfcf" stroke-width="1"/><rect x="52.4" y="586.4" width="2.6" height="2.6" fill="#cfcfcf"/><rect x="44" y="578.4" width="8.2" height="8.2" fill="#fff" stroke="#cfcfcf" stroke-width="1"/><path d="M44.6 586 L51.6 579" stroke="#d2141c" stroke-width="1.4"/><rect x="49" y="605.3" width="22.2" height="20" rx="3" fill="#2a2a2a"/><rect x="55" y="610.2" width="10.2" height="10.2" fill="#8a8a8a" stroke="#bdbdbd" stroke-width="1"/><path d="M82.8 609.2 h12.6 v3.6 h-1.5 v-1.6 h-3 v8.6 h1.8 v1.8 h-7.2 v-1.8 h1.8 v-8.6 h-3 v1.6 h-1.5 z" fill="#c9c9c9"/><rect x="38.5" y="633.8" width="22.6" height="22" rx="3" fill="#2a2a2a"/><rect x="42.4" y="638.2" width="14.4" height="13.6" fill="#d1c9bd" stroke="#efefef" stroke-width="0.8"/><path d="M59.6 654.6 v-3 l-3 3 z" fill="#d8d8d8"/><rect x="67" y="638.2" width="14.4" height="13.6" fill="url(#g3)" stroke="#cfcfcf" stroke-width="0.8"/><rect x="92" y="638.2" width="14.4" height="13.6" fill="#fff" stroke="#cfcfcf" stroke-width="0.8"/><path d="M93 651 L105.4 639" stroke="#d2141c" stroke-width="2"/><rect x="52.5" y="676.6" width="12.6" height="8.6" fill="#c9c9c9"/><path d="M49.5 675.4 v-2.6 h2.6 M54.6 672.8 h2.2 M59.2 672.8 h2.2 M63.6 672.8 h1.6 M49.5 678.2 v2 M49.5 683 v2.6 h1.6" fill="none" stroke="#c9c9c9" stroke-width="1.3"/><rect x="49.6" y="706" width="14.6" height="14" rx="1" fill="none" stroke="#9a9a9a" stroke-width="1.3"/><rect x="52.4" y="709.6" width="6" height="4.6" fill="none" stroke="#9a9a9a" stroke-width="1.1"/><rect x="55.6" y="712" width="6" height="4.6" fill="#535353" stroke="#9a9a9a" stroke-width="1.1"/><rect x="76" y="698.8" width="35.2" height="27" rx="4" fill="#2a2a2a"/><rect x="87.4" y="706.4" width="14.4" height="13" fill="#7a7a7a" stroke="#b5b5b5" stroke-width="1"/><rect x="87.4" y="706.4" width="14.4" height="2.6" fill="#b5b5b5"/><path d="M109 725.2 v-4.4 l-4.4 4.4 z" fill="#d8d8d8"/></svg>
<div style="left:1448px;top:131px;width:304px;height:714px;background:#535353;"></div>
<div style="left:1448px;top:131px;width:304px;height:5px;background:#363636;"></div>
<div style="left:1448px;top:132px;width:1px;height:713px;background:#3d3d3d;"></div>
<div style="left:1751px;top:132px;width:1px;height:713px;background:#3d3d3d;"></div>
<div style="left:1449px;top:136px;width:302px;height:34px;background:#454545;"></div>
<div style="left:1449px;top:169px;width:302px;height:1px;background:#3c3c3c;"></div>
<div style="left:1449px;top:136px;width:77px;height:34px;background:#535353;"></div>
<div style="left:1526px;top:136px;width:1px;height:33px;background:#3c3c3c;"></div>
<div style="left:1598px;top:136px;width:1px;height:33px;background:#3c3c3c;"></div>
<div style="left:1661px;top:136px;width:1px;height:33px;background:#3c3c3c;"></div>
<div class="t" style="left:1472.5px;top:146.15px;font-size:14px;line-height:14px;color:#f2f2f2;font-weight:bold;letter-spacing:-0.250px;">Pages</div>
<div class="t" style="left:1541px;top:146.15px;font-size:14px;line-height:14px;color:#b4b4b4;font-weight:bold;letter-spacing:-0.357px;">Layers</div>
<div class="t" style="left:1614px;top:146.15px;font-size:14px;line-height:14px;color:#b4b4b4;font-weight:bold;letter-spacing:-0.513px;">Links</div>
<div class="t" style="left:1453.3px;top:182.60px;font-size:13px;line-height:13px;color:#e8e8e8;letter-spacing:-0.050px;">[None]</div>
<div class="t" style="left:1453.3px;top:218.00px;font-size:13px;line-height:13px;color:#e8e8e8;letter-spacing:-0.538px;">A-Parent</div>
<div style="left:1680.8px;top:174.7px;width:41.8px;height:29.6px;background:#fff;"></div>
<div style="left:1637.5px;top:211.7px;width:85.1px;height:29.6px;background:#fff;"></div>
<div style="left:1680px;top:211.7px;width:1px;height:29.6px;background:#8a8a8a;"></div>
<div style="left:1449px;top:382.5px;width:302px;height:2px;background:#5f5f5f;"></div>
<div style="left:1449px;top:384.5px;width:302px;height:1px;background:#484848;"></div>
<div style="left:1734.5px;top:386px;width:15.5px;height:417px;background:#4a4a4a;"></div>
<div style="left:1735.5px;top:405.5px;width:13px;height:150px;background:#6b6b6b;border-radius:6.5px;"></div>
<svg style="left:1527.8px;top:401.6px" width="127.4" height="44.5" viewBox="0 0 200 70" preserveAspectRatio="none"><svg x="0" y="0" width="100" height="70" viewBox="0 0 100 70" overflow="hidden"><g transform="translate(50,34) scale(1.045) translate(-50,-35)"><rect x="0" y="0" width="100" height="70" fill="#dbd5ce"/><rect x="3" y="3.2" width="8" height="0.9" fill="#6d6560"/><rect x="91" y="3.2" width="6" height="0.9" fill="#6d6560"/><path d="M14 56.2 V32.6 a20 20 0 0 1 40 0 V56.2 Z" fill="#3b2720"/><rect x="60.4" y="18.7" width="26.6" height="0.6" fill="#6a625c"/><rect x="82" y="18.2" width="5" height="1.4" fill="#8a837d"/><rect x="60.4" y="21" width="11.6" height="2.4" fill="#8a8580"/><rect x="60.4" y="24.4" width="8" height="2" fill="#8a8580"/><rect x="60.4" y="27.4" width="6.2" height="1.6" fill="#8f8a85"/><rect x="60.4" y="41" width="10.2" height="2" fill="#7d7873"/><rect x="60.4" y="44" width="26.6" height="8.4" fill="#8b8b8b"/><rect x="60.4" y="53.4" width="26.6" height="1.2" fill="#99948f"/><rect x="60.4" y="55.2" width="17" height="1" fill="#a39e99"/><rect x="3" y="66.6" width="94" height="0.7" fill="#5d4d45"/><rect x="49.5" y="68" width="1.2" height="0.8" fill="#777"/></g></svg><svg x="100" y="0" width="100" height="70" viewBox="0 0 100 70" overflow="hidden"><g transform="translate(50,34) scale(1.045) translate(-50,-35)"><rect x="0" y="0" width="100" height="70" fill="#fff"/><rect x="3" y="3.2" width="8" height="0.9" fill="#999"/><rect x="91" y="3.2" width="6" height="0.9" fill="#999"/><rect x="13" y="12.6" width="5" height="1" fill="#555"/><rect x="13" y="14.4" width="23" height="8" fill="#8e8e8e"/><rect x="13" y="22.6" width="17" height="0.9" fill="#aaa"/><rect x="13" y="27.4" width="23" height="1.2" fill="#888"/><rect x="13" y="29" width="21" height="1" fill="#aaa"/><rect x="38.4" y="12.6" width="22.8" height="17.2" fill="#d3c9be"/><rect x="63" y="12.6" width="22.9" height="17.2" fill="#d3c9be"/><rect x="13" y="33.4" width="4" height="0.8" fill="#777"/><rect x="38.4" y="33.4" width="12" height="0.8" fill="#666"/><rect x="13" y="33.9" width="72.9" height="0.4" fill="#ccc"/><rect x="13" y="35.2" width="23" height="26.1" fill="#d3c9be"/><rect x="38.4" y="35.2" width="47.5" height="26.1" fill="#d3c9be"/><rect x="3" y="66.6" width="94" height="0.6" fill="#8a8a8a"/><rect x="49.5" y="68" width="1.2" height="0.8" fill="#777"/></g></svg></svg>
<div style="left:1591px;top:393.6px;width:1px;height:58.5px;background:#c4c4c4;"></div>
<div style="left:1527.8px;top:401.6px;width:13px;height:13.5px;background:#fff;"></div>
<div style="left:1641.6000000000001px;top:401.6px;width:13.6px;height:13.5px;background:#fff;"></div>
<div class="t" style="left:1529.2px;top:404.42px;font-size:12.5px;line-height:12.5px;color:#111;letter-spacing:-0.938px;">A</div>
<div class="t" style="left:1643.8px;top:404.42px;font-size:12.5px;line-height:12.5px;color:#111;letter-spacing:-0.938px;">A</div>
<div class="t" style="left:1574.4px;top:456.84px;font-size:12px;line-height:12px;color:#f0f0f0;letter-spacing:0.062px;">16-17</div>
<svg style="left:1527.8px;top:481.6px" width="127.4" height="44.5" viewBox="0 0 200 70" preserveAspectRatio="none"><svg x="0" y="0" width="100" height="70" viewBox="0 0 100 70" overflow="hidden"><g transform="translate(50,34) scale(1.045) translate(-50,-35)"><rect x="0" y="0" width="100" height="70" fill="#fff"/><rect x="3" y="3.2" width="8" height="0.9" fill="#999"/><rect x="91" y="3.2" width="6" height="0.9" fill="#999"/><rect x="7.3" y="13.7" width="41.6" height="23.3" fill="#fff" stroke="#d4d4d4" stroke-width="0.5"/><rect x="7.3" y="13.4" width="41.6" height="0.5" fill="#aaa"/><rect x="7.3" y="13" width="7" height="1.1" fill="#888"/><rect x="7.3" y="41" width="41.6" height="19" fill="#fff" stroke="#d4d4d4" stroke-width="0.5"/><rect x="7.3" y="40.7" width="41.6" height="0.5" fill="#aaa"/><rect x="7.3" y="40.3" width="4.5" height="1.1" fill="#999"/><rect x="7.3" y="57.6" width="41.6" height="2.6" fill="#2a211d"/><rect x="51.9" y="13.7" width="41.6" height="23.3" fill="#fff" stroke="#d4d4d4" stroke-width="0.5"/><rect x="51.9" y="13.4" width="41.6" height="0.5" fill="#aaa"/><rect x="51.9" y="13" width="7" height="1.1" fill="#888"/><rect x="51.9" y="41" width="41.6" height="19" fill="#fff" stroke="#d4d4d4" stroke-width="0.5"/><rect x="51.9" y="40.7" width="41.6" height="0.5" fill="#aaa"/><rect x="51.9" y="40.3" width="4.5" height="1.1" fill="#999"/><rect x="51.9" y="57.6" width="41.6" height="2.6" fill="#2a211d"/><rect x="3" y="66.6" width="94" height="0.6" fill="#8a8a8a"/><rect x="49.5" y="68" width="1.2" height="0.8" fill="#777"/></g></svg><svg x="100" y="0" width="100" height="70" viewBox="0 0 100 70" overflow="hidden"><g transform="translate(50,34) scale(1.045) translate(-50,-35)"><rect x="0" y="0" width="100" height="70" fill="#dbd5ce"/><rect x="3" y="3.2" width="8" height="0.9" fill="#5b504a"/><rect x="91" y="3.2" width="6" height="0.9" fill="#5b504a"/><rect x="6.4" y="13.2" width="41.8" height="0.5" fill="#8d837c"/><rect x="6.4" y="12.8" width="5" height="1" fill="#7c716a"/><rect x="6.4" y="15" width="41.8" height="20.3" fill="#3b2720"/><rect x="6.4" y="37.8" width="41.8" height="0.5" fill="#8d837c"/><rect x="6.4" y="37.4" width="5" height="1" fill="#7c716a"/><rect x="6.4" y="39.6" width="41.8" height="20.4" fill="#3b2720"/><rect x="51" y="13.2" width="41.8" height="0.5" fill="#8d837c"/><rect x="51" y="12.8" width="5" height="1" fill="#7c716a"/><rect x="51" y="15" width="41.8" height="20.3" fill="#3b2720"/><rect x="51" y="37.8" width="41.8" height="0.5" fill="#8d837c"/><rect x="51" y="37.4" width="5" height="1" fill="#7c716a"/><rect x="51" y="39.6" width="41.8" height="20.4" fill="#3b2720"/><rect x="3" y="66.6" width="94" height="1.0" fill="#5d4d45"/><rect x="49.5" y="68" width="1.2" height="0.8" fill="#777"/></g></svg></svg>
<div style="left:1591px;top:473.6px;width:1px;height:58.5px;background:#c4c4c4;"></div>
<div style="left:1527.8px;top:481.6px;width:13px;height:13.5px;background:#fff;"></div>
<div style="left:1641.6000000000001px;top:481.6px;width:13.6px;height:13.5px;background:#fff;"></div>
<div class="t" style="left:1529.2px;top:484.42px;font-size:12.5px;line-height:12.5px;color:#111;letter-spacing:-0.938px;">A</div>
<div class="t" style="left:1643.8px;top:484.42px;font-size:12.5px;line-height:12.5px;color:#111;letter-spacing:-0.938px;">A</div>
<div class="t" style="left:1574.4px;top:536.84px;font-size:12px;line-height:12px;color:#f0f0f0;letter-spacing:0.062px;">18-19</div>
<svg style="left:1527.8px;top:561.6px" width="127.4" height="44.5" viewBox="0 0 200 70" preserveAspectRatio="none"><svg x="0" y="0" width="100" height="70" viewBox="0 0 100 70" overflow="hidden"><g transform="translate(50,34) scale(1.045) translate(-50,-35)"><rect x="0" y="0" width="100" height="70" fill="#dbd5ce"/><rect x="3" y="3.2" width="8" height="0.9" fill="#6d6560"/><rect x="91" y="3.2" width="6" height="0.9" fill="#6d6560"/><path d="M14 56.2 V32.6 a20 20 0 0 1 40 0 V56.2 Z" fill="#3b2720"/><rect x="60.4" y="18.7" width="26.6" height="0.6" fill="#6a625c"/><rect x="82" y="18.2" width="5" height="1.4" fill="#8a837d"/><rect x="60.4" y="21" width="11.6" height="2.4" fill="#8a8580"/><rect x="60.4" y="24.4" width="8" height="2" fill="#8a8580"/><rect x="60.4" y="27.4" width="6.2" height="1.6" fill="#8f8a85"/><rect x="60.4" y="41" width="10.2" height="2" fill="#7d7873"/><rect x="60.4" y="44" width="26.6" height="8.4" fill="#8b8b8b"/><rect x="60.4" y="53.4" width="26.6" height="1.2" fill="#99948f"/><rect x="60.4" y="55.2" width="17" height="1" fill="#a39e99"/><rect x="3" y="66.6" width="94" height="0.7" fill="#5d4d45"/><rect x="49.5" y="68" width="1.2" height="0.8" fill="#777"/></g></svg><svg x="100" y="0" width="100" height="70" viewBox="0 0 100 70" overflow="hidden"><g transform="translate(50,34) scale(1.045) translate(-50,-35)"><rect x="0" y="0" width="100" height="70" fill="#fff"/><rect x="3" y="3.2" width="8" height="0.9" fill="#999"/><rect x="91" y="3.2" width="6" height="0.9" fill="#999"/><rect x="13" y="12.6" width="5" height="1" fill="#555"/><rect x="13" y="14.4" width="23" height="8" fill="#8e8e8e"/><rect x="13" y="22.6" width="17" height="0.9" fill="#aaa"/><rect x="13" y="27.4" width="23" height="1.2" fill="#888"/><rect x="13" y="29" width="21" height="1" fill="#aaa"/><rect x="38.4" y="12.6" width="22.8" height="17.2" fill="#d3c9be"/><rect x="63" y="12.6" width="22.9" height="17.2" fill="#d3c9be"/><rect x="13" y="33.4" width="4" height="0.8" fill="#777"/><rect x="38.4" y="33.4" width="12" height="0.8" fill="#666"/><rect x="13" y="33.9" width="72.9" height="0.4" fill="#ccc"/><rect x="13" y="35.2" width="23" height="26.1" fill="#d3c9be"/><rect x="38.4" y="35.2" width="47.5" height="26.1" fill="#d3c9be"/><rect x="3" y="66.6" width="94" height="0.6" fill="#8a8a8a"/><rect x="49.5" y="68" width="1.2" height="0.8" fill="#777"/></g></svg></svg>
<div style="left:1591px;top:553.6px;width:1px;height:58.5px;background:#c4c4c4;"></div>
<div style="left:1527.8px;top:561.6px;width:13px;height:13.5px;background:#fff;"></div>
<div style="left:1641.6000000000001px;top:561.6px;width:13.6px;height:13.5px;background:#fff;"></div>
<div class="t" style="left:1529.2px;top:564.42px;font-size:12.5px;line-height:12.5px;color:#111;letter-spacing:-0.938px;">A</div>
<div class="t" style="left:1643.8px;top:564.42px;font-size:12.5px;line-height:12.5px;color:#111;letter-spacing:-0.938px;">A</div>
<div class="t" style="left:1574.4px;top:616.84px;font-size:12px;line-height:12px;color:#f0f0f0;letter-spacing:0.062px;">20-21</div>
<svg style="left:1527.8px;top:641.6px" width="127.4" height="44.5" viewBox="0 0 200 70" preserveAspectRatio="none"><svg x="0" y="0" width="100" height="70" viewBox="0 0 100 70" overflow="hidden"><g transform="translate(50,34) scale(1.045) translate(-50,-35)"><rect x="0" y="0" width="100" height="70" fill="#fff"/><rect x="3" y="3.2" width="8" height="0.9" fill="#999"/><rect x="91" y="3.2" width="6" height="0.9" fill="#999"/><rect x="7.3" y="13.7" width="41.6" height="23.3" fill="#fff" stroke="#d4d4d4" stroke-width="0.5"/><rect x="7.3" y="13.4" width="41.6" height="0.5" fill="#aaa"/><rect x="7.3" y="13" width="7" height="1.1" fill="#888"/><rect x="7.3" y="41" width="41.6" height="19" fill="#fff" stroke="#d4d4d4" stroke-width="0.5"/><rect x="7.3" y="40.7" width="41.6" height="0.5" fill="#aaa"/><rect x="7.3" y="40.3" width="4.5" height="1.1" fill="#999"/><rect x="7.3" y="57.6" width="41.6" height="2.6" fill="#2a211d"/><rect x="51.9" y="13.7" width="41.6" height="23.3" fill="#fff" stroke="#d4d4d4" stroke-width="0.5"/><rect x="51.9" y="13.4" width="41.6" height="0.5" fill="#aaa"/><rect x="51.9" y="13" width="7" height="1.1" fill="#888"/><rect x="51.9" y="41" width="41.6" height="19" fill="#fff" stroke="#d4d4d4" stroke-width="0.5"/><rect x="51.9" y="40.7" width="41.6" height="0.5" fill="#aaa"/><rect x="51.9" y="40.3" width="4.5" height="1.1" fill="#999"/><rect x="51.9" y="57.6" width="41.6" height="2.6" fill="#2a211d"/><rect x="3" y="66.6" width="94" height="0.6" fill="#8a8a8a"/><rect x="49.5" y="68" width="1.2" height="0.8" fill="#777"/></g></svg><svg x="100" y="0" width="100" height="70" viewBox="0 0 100 70" overflow="hidden"><g transform="translate(50,34) scale(1.045) translate(-50,-35)"><rect x="0" y="0" width="100" height="70" fill="#dbd5ce"/><rect x="3" y="3.2" width="8" height="0.9" fill="#5b504a"/><rect x="91" y="3.2" width="6" height="0.9" fill="#5b504a"/><rect x="6.4" y="13.2" width="41.8" height="0.5" fill="#8d837c"/><rect x="6.4" y="12.8" width="5" height="1" fill="#7c716a"/><rect x="6.4" y="15" width="41.8" height="20.3" fill="#3b2720"/><rect x="6.4" y="37.8" width="41.8" height="0.5" fill="#8d837c"/><rect x="6.4" y="37.4" width="5" height="1" fill="#7c716a"/><rect x="6.4" y="39.6" width="41.8" height="20.4" fill="#3b2720"/><rect x="51" y="13.2" width="41.8" height="0.5" fill="#8d837c"/><rect x="51" y="12.8" width="5" height="1" fill="#7c716a"/><rect x="51" y="15" width="41.8" height="20.3" fill="#3b2720"/><rect x="51" y="37.8" width="41.8" height="0.5" fill="#8d837c"/><rect x="51" y="37.4" width="5" height="1" fill="#7c716a"/><rect x="51" y="39.6" width="41.8" height="20.4" fill="#3b2720"/><rect x="3" y="66.6" width="94" height="1.0" fill="#5d4d45"/><rect x="49.5" y="68" width="1.2" height="0.8" fill="#777"/></g></svg></svg>
<div style="left:1591px;top:633.6px;width:1px;height:58.5px;background:#c4c4c4;"></div>
<div style="left:1527.8px;top:641.6px;width:13px;height:13.5px;background:#fff;"></div>
<div style="left:1641.6000000000001px;top:641.6px;width:13.6px;height:13.5px;background:#fff;"></div>
<div class="t" style="left:1529.2px;top:644.42px;font-size:12.5px;line-height:12.5px;color:#111;letter-spacing:-0.938px;">A</div>
<div class="t" style="left:1643.8px;top:644.42px;font-size:12.5px;line-height:12.5px;color:#111;letter-spacing:-0.938px;">A</div>
<div class="t" style="left:1574.4px;top:696.84px;font-size:12px;line-height:12px;color:#f0f0f0;letter-spacing:0.062px;">22-23</div>
<div style="left:1527.8px;top:721.1px;width:63px;height:45.8px;background:#80afe0;"></div>
<div style="left:1591px;top:713.1px;width:1px;height:59.5px;background:#c4c4c4;"></div>
<div style="left:1529.0px;top:722.1px;width:14.2px;height:13px;background:#fff;"></div>
<div class="t" style="left:1529.8px;top:723.52px;font-size:12.5px;line-height:12.5px;color:#000;font-weight:bold;letter-spacing:-0.627px;">A</div>
<div style="left:1545.7px;top:773px;width:23.3px;height:14.6px;background:#2f86dd;"></div>
<div class="t" style="left:1550.8px;top:775.00px;font-size:13px;line-height:13px;color:#fff;font-weight:bold;letter-spacing:0.170px;">24</div>
<div class="t" style="left:1456px;top:813.60px;font-size:13px;line-height:13px;color:#e4e4e4;letter-spacing:-0.262px;">24 Pages in 13 Spreads</div>
<div style="left:1448px;top:833.5px;width:304px;height:1.5px;background:#383838;"></div>
<div style="left:1448px;top:835px;width:304px;height:9.5px;background:#4f4f4f;"></div>
<div style="left:1448px;top:844px;width:304px;height:1px;background:#444;"></div>
<svg style="left:1448px;top:132px" width="304" height="714" viewBox="1448 132 304 714"><path d="M1459.5 153.1 L1462.2 149.70000000000002 L1464.9 153.1" fill="none" stroke="#d4d4d4" stroke-width="1.2" stroke-linecap="round" stroke-linejoin="round"/><path d="M1459.5 154.9 L1462.2 158.29999999999998 L1464.9 154.9" fill="none" stroke="#d4d4d4" stroke-width="1.2" stroke-linecap="round" stroke-linejoin="round"/><path d="M1700.8 150.7 L1704.3999999999999 154 L1700.8 157.3" fill="none" stroke="#ececec" stroke-width="1.9" stroke-linecap="round" stroke-linejoin="round"/><path d="M1706.8 150.7 L1710.3999999999999 154 L1706.8 157.3" fill="none" stroke="#ececec" stroke-width="1.9" stroke-linecap="round" stroke-linejoin="round"/><rect x="1720.6" y="146" width="1" height="14" fill="#9a9a9a"/><path d="M1730 149.5 h13.6 M1730 152.3 h13.6 M1730 155.1 h13.6 M1730 157.9 h13.6" stroke="#bdbdbd" stroke-width="1.1"/><path d="M1737.5 398.90000000000003 L1742 394.7 L1746.5 398.90000000000003" fill="none" stroke="#8d8d8d" stroke-width="1.2" stroke-linecap="round" stroke-linejoin="round"/><path d="M1737.5 793.4 L1742 797.6 L1746.5 793.4" fill="none" stroke="#8d8d8d" stroke-width="1.2" stroke-linecap="round" stroke-linejoin="round"/><path d="M1563 750.6 a6.85 7.2 0 0 1 13.7 0 z" fill="#2c5f97"/><rect x="1554" y="752.3" width="11.6" height="2.3" fill="#2c5f97"/><rect x="1548.4" y="757" width="24.6" height="0.8" fill="#4679ae"/><rect x="1555.4" y="755.6" width="10" height="0.7" fill="#4679ae"/><rect x="1554.6" y="759.6" width="10.6" height="1" fill="#2c5f97"/><path d="M1557 759.8 l3 -1.6 l3 1.6" fill="none" stroke="#2c5f97" stroke-width="0.7"/><g fill="none" stroke="#a9a9a9" stroke-width="1.4"><rect x="1633.2" y="817.4" width="14" height="8.2"/><path d="M1639.4 817.2 v-5 h5.2 l3.4 3.4 v3.2"/><path d="M1644.4 812.4 v3.6 h3.4" stroke-width="1"/></g><rect x="1651.6" y="824.6" width="1.8" height="1.8" fill="#a9a9a9"/><rect x="1672.6" y="811.6" width="13.6" height="13.4" fill="none" stroke="#b3b3b3" stroke-width="1.3"/><path d="M1679.4 814.6 v7.4 M1675.7 818.3 h7.4" stroke="#b3b3b3" stroke-width="1.4"/><g transform="translate(0,-0.8)" stroke="#9f9f9f" fill="none"><path d="M1706 814 h14.4" stroke-width="1.6"/><path d="M1710.4 813.6 v-2 h5.6 v2" stroke-width="1.2"/><path d="M1707.6 815 v10.6 h11.2 v-10.6" stroke-width="1.4"/><path d="M1710.8 816.6 v7 M1713.2 816.6 v7 M1715.6 816.6 v7" stroke-width="1.2"/></g><rect x="1587.0" y="833" width="1.2" height="9.6" fill="#3d3d3d"/><rect x="1590.2" y="833" width="1.2" height="9.6" fill="#3d3d3d"/><rect x="1593.4" y="833" width="1.2" height="9.6" fill="#3d3d3d"/><rect x="1596.6" y="833" width="1.2" height="9.6" fill="#3d3d3d"/><rect x="1599.8" y="833" width="1.2" height="9.6" fill="#3d3d3d"/><rect x="1603.0" y="833" width="1.2" height="9.6" fill="#3d3d3d"/><rect x="1606.2" y="833" width="1.2" height="9.6" fill="#3d3d3d"/><rect x="1609.4" y="833" width="1.2" height="9.6" fill="#3d3d3d"/></svg>
<div style="left:1752px;top:120px;width:168px;height:878px;background:#535353;"></div>
<div style="left:1752px;top:120px;width:168px;height:14px;background:#454545;"></div>
<div style="left:1750px;top:120px;width:2px;height:14px;background:#383838;"></div>
<div style="left:1752px;top:134px;width:168px;height:1px;background:#3c3c3c;"></div>
<div style="left:1751px;top:134px;width:1.5px;height:864px;background:#434343;"></div>
<div style="left:1869px;top:134px;width:3px;height:864px;background:#444444;"></div>
<div style="left:1870px;top:134px;width:1px;height:864px;background:#3c3c3c;"></div>
<div style="left:1914.5px;top:186px;width:1px;height:812px;background:#4b4b4b;"></div>
<div style="left:1752px;top:254.5px;width:117px;height:1.5px;background:#3e3e3e;"></div>
<div style="left:1752px;top:341.5px;width:117px;height:1.5px;background:#3e3e3e;"></div>
<div style="left:1752px;top:393.5px;width:117px;height:1.5px;background:#3e3e3e;"></div>
<div style="left:1872px;top:185.5px;width:48px;height:1.5px;background:#3e3e3e;"></div>
<div style="left:1760px;top:150.5px;width:102px;height:27px;background:#383838;border-radius:2px;"></div>
<div class="t" style="left:1800px;top:158.35px;font-size:14px;line-height:14px;color:#f2f2f2;font-weight:bold;letter-spacing:0.150px;">Pages</div>
<div class="t" style="left:1800px;top:193.15px;font-size:14px;line-height:14px;color:#f2f2f2;font-weight:bold;letter-spacing:-0.024px;">Layers</div>
<div class="t" style="left:1800px;top:228.15px;font-size:14px;line-height:14px;color:#f2f2f2;font-weight:bold;letter-spacing:-0.313px;">Links</div>
<div class="t" style="left:1800px;top:279.15px;font-size:14px;line-height:14px;color:#f2f2f2;font-weight:bold;letter-spacing:0.321px;">Stroke</div>
<div class="t" style="left:1800px;top:314.15px;font-size:14px;line-height:14px;color:#f2f2f2;font-weight:bold;letter-spacing:0.290px;">Color</div>
<div class="t" style="left:1800px;top:365.15px;font-size:14px;line-height:14px;color:#f2f2f2;font-weight:bold;letter-spacing:-0.141px;">Swatc...</div>
<svg style="left:1752px;top:120px" width="168" height="300" viewBox="1752 120 168 300"><path d="M1858 123.8 l-3 2.8 l3 2.8 z M1862.4 123.8 l-3 2.8 l3 2.8 z" fill="#d0d0d0"/><path d="M1907.5 123.8 l-3 2.8 l3 2.8 z M1911.9 123.8 l-3 2.8 l3 2.8 z" fill="#d0d0d0"/><rect x="1797.2" y="138.5" width="1.2" height="4.6" fill="#3b3b3b"/><rect x="1800.4" y="138.5" width="1.2" height="4.6" fill="#3b3b3b"/><rect x="1803.6" y="138.5" width="1.2" height="4.6" fill="#3b3b3b"/><rect x="1806.8" y="138.5" width="1.2" height="4.6" fill="#3b3b3b"/><rect x="1810.0" y="138.5" width="1.2" height="4.6" fill="#3b3b3b"/><rect x="1813.2" y="138.5" width="1.2" height="4.6" fill="#3b3b3b"/><rect x="1816.4" y="138.5" width="1.2" height="4.6" fill="#3b3b3b"/><rect x="1819.6" y="138.5" width="1.2" height="4.6" fill="#3b3b3b"/><rect x="1797.2" y="260" width="1.2" height="4.6" fill="#3b3b3b"/><rect x="1800.4" y="260" width="1.2" height="4.6" fill="#3b3b3b"/><rect x="1803.6" y="260" width="1.2" height="4.6" fill="#3b3b3b"/><rect x="1806.8" y="260" width="1.2" height="4.6" fill="#3b3b3b"/><rect x="1810.0" y="260" width="1.2" height="4.6" fill="#3b3b3b"/><rect x="1813.2" y="260" width="1.2" height="4.6" fill="#3b3b3b"/><rect x="1816.4" y="260" width="1.2" height="4.6" fill="#3b3b3b"/><rect x="1819.6" y="260" width="1.2" height="4.6" fill="#3b3b3b"/><rect x="1797.2" y="347.5" width="1.2" height="4.6" fill="#3b3b3b"/><rect x="1800.4" y="347.5" width="1.2" height="4.6" fill="#3b3b3b"/><rect x="1803.6" y="347.5" width="1.2" height="4.6" fill="#3b3b3b"/><rect x="1806.8" y="347.5" width="1.2" height="4.6" fill="#3b3b3b"/><rect x="1810.0" y="347.5" width="1.2" height="4.6" fill="#3b3b3b"/><rect x="1813.2" y="347.5" width="1.2" height="4.6" fill="#3b3b3b"/><rect x="1816.4" y="347.5" width="1.2" height="4.6" fill="#3b3b3b"/><rect x="1819.6" y="347.5" width="1.2" height="4.6" fill="#3b3b3b"/><rect x="1884.8" y="138.5" width="1.2" height="4.6" fill="#3b3b3b"/><rect x="1888.0" y="138.5" width="1.2" height="4.6" fill="#3b3b3b"/><rect x="1891.2" y="138.5" width="1.2" height="4.6" fill="#3b3b3b"/><rect x="1894.4" y="138.5" width="1.2" height="4.6" fill="#3b3b3b"/><rect x="1897.6" y="138.5" width="1.2" height="4.6" fill="#3b3b3b"/><rect x="1900.8" y="138.5" width="1.2" height="4.6" fill="#3b3b3b"/><rect x="1904.0" y="138.5" width="1.2" height="4.6" fill="#3b3b3b"/><path d="M1766.6 159 l4.2 -4.2 h5 v17.2 h-9.2 z M1788.8 159 l-4.2 -4.2 h-5 v17.2 h9.2 z" fill="#cdcdcd"/><path d="M1770.8 154.8 v4.2 h-4.2 M1784.6 154.8 v4.2 h4.2" fill="none" stroke="#383838" stroke-width="0.8"/><path d="M1777.7 152 v22.6" stroke="#cdcdcd" stroke-width="1.2"/><path d="M1777.7 188.8 L1788.4 196 L1777.7 203.2 L1767 196 Z" fill="#cdcdcd"/><path d="M1767.6 202.4 L1777.7 209.2 L1787.8 202.4" fill="none" stroke="#cdcdcd" stroke-width="2.4"/><g fill="none" stroke="#cdcdcd" stroke-width="2.5"><rect x="1766.9" y="230.2" width="13" height="8.6" rx="4.3"/><rect x="1775.4" y="230.2" width="13" height="8.6" rx="4.3"/></g><rect x="1767" y="278.8" width="21" height="1.2" fill="#cdcdcd"/><rect x="1767" y="283.8" width="21" height="2.2" fill="#cdcdcd"/><rect x="1767" y="289.4" width="21" height="4" fill="#cdcdcd"/><path d="M1777.6 312 c-6.6 0 -11.6 3.8 -11.6 8.6 c0 4.4 4.2 7.6 10 7.6 c2.4 0 2.6 -1.6 1.8 -2.8 c-0.8 -1.4 0.2 -2.8 2.4 -2.8 h3.4 c3 0 4.6 -1.8 4.6 -4 c0 -3.8 -4.6 -6.6 -10.6 -6.6 z" fill="#cdcdcd"/><circle cx="1770.4" cy="321.6" r="1.5" fill="#535353"/><circle cx="1773.4" cy="325" r="1.5" fill="#535353"/><circle cx="1777.8" cy="325.6" r="1.4" fill="#535353"/><circle cx="1772.6" cy="317.2" r="1.5" fill="#535353"/><circle cx="1777.4" cy="315.4" r="1.5" fill="#535353"/><circle cx="1782.6" cy="316.4" r="1.5" fill="#535353"/><rect x="1766.4" y="364.4" width="20.6" height="14.6" fill="#cdcdcd"/><path d="M1766.4 369.4 h20.6 M1766.4 374.2 h20.6 M1773.2 364.4 v14.6 M1780 364.4 v14.6" stroke="#535353" stroke-width="1"/><rect x="1773.7" y="364.4" width="5.8" height="4.6" fill="#8a8a8a"/><rect x="1780.5" y="369.9" width="6.5" height="3.8" fill="#8a8a8a"/><rect x="1887.4" y="155.2" width="16" height="15.6" rx="1" fill="none" stroke="#bdbdbd" stroke-width="1.2"/><rect x="1890.4" y="158" width="16" height="15.6" rx="1" fill="#535353" stroke="#bdbdbd" stroke-width="1.2"/><path d="M1898 158 h4.8 v9 l-2.4 -2.2 l-2.4 2.2 z" fill="#bdbdbd"/></svg>
<svg style="left:0px;top:0px" width="1920" height="160" viewBox="0 0 1920 160"><path d="M71.2 11.9 L60 22.4 Q59.6 23.4 60.6 23.4 L62.2 23.4 L62.2 31.2 L69 31.2 L69 24.6 L73.6 24.6 L73.6 31.2 L80 31.2 L80 23.4 L81.8 23.4 Q82.8 23.4 82.4 22.4 Z" fill="#d6d6d6"/><path d="M1242.5 10.6 a7.2 7.2 0 0 1 4.2 13 l0 3 l-8.4 0 l0 -3 a7.2 7.2 0 0 1 4.2 -13 z" fill="none" stroke="#cdcdcd" stroke-width="1.5"/><path d="M1239 28.2 h7 v1.5 l-2 2.6 h-3 l-2 -2.6 z" fill="#cdcdcd"/><path d="M1567.8 21.0 L1572 25.6 L1576.2 21.0" fill="none" stroke="#e4e4e4" stroke-width="2.1" stroke-linecap="round" stroke-linejoin="round"/><circle cx="1622.5" cy="19" r="5" fill="none" stroke="#3b86d6" stroke-width="1.8"/><path d="M1618.6 23 L1612.5 28.5" stroke="#3b86d6" stroke-width="2" stroke-linecap="round"/><path d="M1626 23.5 h6.5 l-3.25 3.2 z" fill="#3b86d6"/><rect x="1799" y="12.5" width="13" height="4" fill="#cdcdcd"/><path d="M1837 5.5 h12.5 v9.5 h-3" fill="none" stroke="#cdcdcd" stroke-width="2.4"/><rect x="1833.2" y="10.2" width="11" height="8.6" fill="none" stroke="#cdcdcd" stroke-width="2.4"/><path d="M1882 7.5 L1893 16.5 M1893 7.5 L1882 16.5" stroke="#cdcdcd" stroke-width="2.8"/><rect x="35.5" y="67.5" width="7.6" height="7.6" fill="#fff" stroke="#d6d6d6" stroke-width="1"/><rect x="46.8" y="67.5" width="7.6" height="7.6" fill="none" stroke="#d6d6d6" stroke-width="1"/><rect x="58.1" y="67.5" width="7.6" height="7.6" fill="none" stroke="#d6d6d6" stroke-width="1"/><rect x="35.5" y="78.5" width="7.6" height="7.6" fill="none" stroke="#d6d6d6" stroke-width="1"/><rect x="46.8" y="78.5" width="7.6" height="7.6" fill="none" stroke="#d6d6d6" stroke-width="1"/><rect x="58.1" y="78.5" width="7.6" height="7.6" fill="none" stroke="#d6d6d6" stroke-width="1"/><rect x="35.5" y="90.0" width="7.6" height="7.6" fill="none" stroke="#d6d6d6" stroke-width="1"/><rect x="46.8" y="90.0" width="7.6" height="7.6" fill="none" stroke="#d6d6d6" stroke-width="1"/><rect x="58.1" y="90.0" width="7.6" height="7.6" fill="none" stroke="#d6d6d6" stroke-width="1"/><path d="M43.5 71.3 h3 M55 71.3 h3 M43.5 93.8 h3 M55 93.8 h3 M39.3 75.6 v3 M39.3 86.6 v3.4 M62 75.6 v3 M62 86.6 v3.4" stroke="#d6d6d6" stroke-width="1"/><path d="M104.0 63.0 L108 59.0 L112.0 63.0" fill="none" stroke="#c4c4c4" stroke-width="1.2" stroke-linecap="round" stroke-linejoin="round"/><path d="M104.0 70.0 L108 74.0 L112.0 70.0" fill="none" stroke="#c4c4c4" stroke-width="1.2" stroke-linecap="round" stroke-linejoin="round"/><path d="M104.0 95.5 L108 91.5 L112.0 95.5" fill="none" stroke="#c4c4c4" stroke-width="1.2" stroke-linecap="round" stroke-linejoin="round"/><path d="M104.0 102.5 L108 106.5 L112.0 102.5" fill="none" stroke="#c4c4c4" stroke-width="1.2" stroke-linecap="round" stroke-linejoin="round"/><path d="M245.0 63.0 L249 59.0 L253.0 63.0" fill="none" stroke="#c4c4c4" stroke-width="1.2" stroke-linecap="round" stroke-linejoin="round"/><path d="M245.0 70.0 L249 74.0 L253.0 70.0" fill="none" stroke="#c4c4c4" stroke-width="1.2" stroke-linecap="round" stroke-linejoin="round"/><path d="M245.0 95.5 L249 91.5 L253.0 95.5" fill="none" stroke="#c4c4c4" stroke-width="1.2" stroke-linecap="round" stroke-linejoin="round"/><path d="M245.0 102.5 L249 106.5 L253.0 102.5" fill="none" stroke="#c4c4c4" stroke-width="1.2" stroke-linecap="round" stroke-linejoin="round"/><g transform="translate(368.5,81)" fill="none" stroke="#cdcdcd" stroke-width="1.7" stroke-linecap="round"><path d="M-3 -1.5 v-3 a3 3 0 0 1 6 0 v3 M-3 1.5 v3.5 a3 3 0 0 0 6 0 v-3.5"/><path d="M-6.5 -7.5 L6.5 8" stroke-width="1.5"/></g><rect x="400.6" y="58.6" width="17.8" height="17.8" fill="none" stroke="#cdcdcd" stroke-width="1.2"/><path d="M403.5 67.5 h9 v-2.8 l4 2.8 l-4 2.8 v-2.8" fill="#cdcdcd" stroke="#cdcdcd" stroke-width="1.4"/><path d="M401 78 h18" stroke="#cdcdcd" stroke-width="1" stroke-dasharray="1 1"/><rect x="400.6" y="90.6" width="17.8" height="17.8" fill="none" stroke="#cdcdcd" stroke-width="1.2"/><path d="M409.5 93 v9.5 h-2.8 l2.8 4 l2.8 -4 h-2.8" fill="#cdcdcd" stroke="#cdcdcd" stroke-width="1.4"/><path d="M420.5 90 v18" stroke="#cdcdcd" stroke-width="1" stroke-dasharray="1 1"/><path d="M431.0 63.0 L435 59.0 L439.0 63.0" fill="none" stroke="#c4c4c4" stroke-width="1.2" stroke-linecap="round" stroke-linejoin="round"/><path d="M431.0 70.0 L435 74.0 L439.0 70.0" fill="none" stroke="#c4c4c4" stroke-width="1.2" stroke-linecap="round" stroke-linejoin="round"/><path d="M516.5 64.75 L521 69.25 L525.5 64.75" fill="none" stroke="#c4c4c4" stroke-width="1.3" stroke-linecap="round" stroke-linejoin="round"/><path d="M431.0 95.5 L435 91.5 L439.0 95.5" fill="none" stroke="#c4c4c4" stroke-width="1.2" stroke-linecap="round" stroke-linejoin="round"/><path d="M431.0 102.5 L435 106.5 L439.0 102.5" fill="none" stroke="#c4c4c4" stroke-width="1.2" stroke-linecap="round" stroke-linejoin="round"/><path d="M516.5 97.25 L521 101.75 L525.5 97.25" fill="none" stroke="#c4c4c4" stroke-width="1.3" stroke-linecap="round" stroke-linejoin="round"/><g fill="none" stroke="#e2e2e2" stroke-width="1.8" stroke-linecap="round"><path d="M553.4 82.6 Q550.9 81.8 550.9 79.2 V77 a3.3 3.3 0 0 1 6.6 0 V83"/><path d="M554.9 81.6 Q557.5 82.4 557.5 85 V87.2 a3.3 3.3 0 0 1 -6.6 0 V81.6"/></g><path d="M580.5 71.2 H595 M580.9 70.9 L590.9 60.3" fill="none" stroke="#cdcdcd" stroke-width="1.6" stroke-linecap="round"/><path d="M592 71 V64.2 L586.6 71 Z" fill="#8a8a8a" stroke="#cdcdcd" stroke-width="1.1"/><path d="M580.5 105.5 L585.5 94 L595.5 94 L590.5 105.5 Z" fill="#cdcdcd"/><path d="M609.0 63.0 L613 59.0 L617.0 63.0" fill="none" stroke="#c4c4c4" stroke-width="1.2" stroke-linecap="round" stroke-linejoin="round"/><path d="M609.0 70.0 L613 74.0 L617.0 70.0" fill="none" stroke="#c4c4c4" stroke-width="1.2" stroke-linecap="round" stroke-linejoin="round"/><path d="M694.0 64.75 L698.5 69.25 L703.0 64.75" fill="none" stroke="#c4c4c4" stroke-width="1.3" stroke-linecap="round" stroke-linejoin="round"/><path d="M609.0 95.5 L613 91.5 L617.0 95.5" fill="none" stroke="#c4c4c4" stroke-width="1.2" stroke-linecap="round" stroke-linejoin="round"/><path d="M609.0 102.5 L613 106.5 L617.0 102.5" fill="none" stroke="#c4c4c4" stroke-width="1.2" stroke-linecap="round" stroke-linejoin="round"/><path d="M694.0 97.25 L698.5 101.75 L703.0 97.25" fill="none" stroke="#c4c4c4" stroke-width="1.3" stroke-linecap="round" stroke-linejoin="round"/><path d="M746.5 62 A9 9 0 1 0 748 68.5" fill="none" stroke="#8b8b8b" stroke-width="1.6"/><path d="M742.5 57.5 l6.2 -0.5 l-0.3 6.5 z" fill="#8b8b8b"/><path d="M731 70.5 A9 9 0 0 0 747 72" fill="none" stroke="#535353" stroke-width="2.2" stroke-dasharray="1.3 1.6"/><path d="M765.5 62 A9 9 0 1 1 764 68.5" fill="none" stroke="#8b8b8b" stroke-width="1.6"/><path d="M769.5 57.5 l-6.2 -0.5 l0.3 6.5 z" fill="#8b8b8b"/><path d="M781 70.5 A9 9 0 0 1 765 72" fill="none" stroke="#535353" stroke-width="2.2" stroke-dasharray="1.3 1.6"/><path d="M729.5 91.5 L735.5 98.5 L729.5 105.5 Z" fill="none" stroke="#8b8b8b" stroke-width="1.4"/><path d="M748.5 91 L741.5 98.5 L748.5 106 Z" fill="#8b8b8b"/><path d="M738.7 89 v19" stroke="#8b8b8b" stroke-width="1" stroke-dasharray="1.5 1"/><path d="M766.5 90.5 L773 96 L779.5 90.5 Z" fill="none" stroke="#8b8b8b" stroke-width="1.4"/><path d="M765.5 109.5 L773 102.5 L780.5 109.5 Z" fill="#8b8b8b"/><path d="M763 99 h20" stroke="#8b8b8b" stroke-width="1" stroke-dasharray="1.5 1"/><path d="M797 70.5 v-3.5 h4.5 M830.5 70.5 v-3.5 h-4.5 M797 93 v4 h4.5 M830.5 93 v4 h-4.5" fill="none" stroke="#8b8b8b" stroke-width="1.2"/><g transform="translate(860,67)" fill="#8b8b8b" stroke="#8b8b8b"><rect x="-1.8" y="-4.5" width="3.6" height="4" stroke="none"/><path d="M0 -0.5 v2.5 M-6 5 v-3 h12 v3" fill="none" stroke-width="1.1"/><rect x="-7.8" y="4.3" width="3.6" height="4" stroke="none"/><rect x="-1.8" y="4.3" width="3.6" height="4" stroke="none"/><rect x="4.2" y="4.3" width="3.6" height="4" stroke="none"/></g><path d="M855.5 60.5 h9 l-4.5 -4 z" fill="#8b8b8b"/><g transform="translate(860,96.5)" fill="#8b8b8b" stroke="#8b8b8b"><rect x="-1.8" y="-4.5" width="3.6" height="4" stroke="none"/><path d="M0 -0.5 v2.5 M-6 5 v-3 h12 v3" fill="none" stroke-width="1.1"/><rect x="-7.8" y="4.3" width="3.6" height="4" stroke="none"/><rect x="-1.8" y="4.3" width="3.6" height="4" stroke="none"/><rect x="4.2" y="4.3" width="3.6" height="4" stroke="none"/></g><path d="M855.5 107 h9 l-4.5 4 z" fill="#8b8b8b"/><g transform="translate(897,67)" fill="#8b8b8b" stroke="#8b8b8b"><rect x="-1.8" y="-4.5" width="3.6" height="4" stroke="none"/><path d="M0 -0.5 v2.5 M-6 5 v-3 h12 v3" fill="none" stroke-width="1.1"/><rect x="-7.8" y="4.3" width="3.6" height="4" stroke="none"/><rect x="-1.8" y="4.3" width="3.6" height="4" stroke="none"/><rect x="4.2" y="4.3" width="3.6" height="4" stroke="none"/></g><path d="M887.5 60 v9 l-4.5 -4.5 z" fill="#8b8b8b"/><g transform="translate(891,99)" fill="#8b8b8b" stroke="#8b8b8b"><rect x="-1.8" y="-4.5" width="3.6" height="4" stroke="none"/><path d="M0 -0.5 v2.5 M-6 5 v-3 h12 v3" fill="none" stroke-width="1.1"/><rect x="-7.8" y="4.3" width="3.6" height="4" stroke="none"/><rect x="-1.8" y="4.3" width="3.6" height="4" stroke="none"/><rect x="4.2" y="4.3" width="3.6" height="4" stroke="none"/></g><path d="M900.5 94.5 v9 l4.5 -4.5 z" fill="#8b8b8b"/><path d="M961.75 61.5 L966.25 66 L961.75 70.5" fill="none" stroke="#d0d0d0" stroke-width="1.3" stroke-linecap="round" stroke-linejoin="round"/><path d="M961.75 94.5 L966.25 99 L961.75 103.5" fill="none" stroke="#d0d0d0" stroke-width="1.3" stroke-linecap="round" stroke-linejoin="round"/><path d="M925.5 109.5 L947 88.5" stroke="#d3131c" stroke-width="2.6"/><path d="M995.0 62.8 L999 58.8 L1003.0 62.8" fill="none" stroke="#d0d0d0" stroke-width="1.2" stroke-linecap="round" stroke-linejoin="round"/><path d="M995.0 70.2 L999 74.2 L1003.0 70.2" fill="none" stroke="#d0d0d0" stroke-width="1.2" stroke-linecap="round" stroke-linejoin="round"/><path d="M1080.0 64.25 L1084.5 68.75 L1089.0 64.25" fill="none" stroke="#d0d0d0" stroke-width="1.3" stroke-linecap="round" stroke-linejoin="round"/><path d="M1080.0 97.25 L1084.5 101.75 L1089.0 97.25" fill="none" stroke="#d0d0d0" stroke-width="1.3" stroke-linecap="round" stroke-linejoin="round"/><rect x="1115" y="57.6" width="16.4" height="14.6" rx="1" fill="#bcbcbc"/><rect x="1117.7" y="60.2" width="11" height="9.4" fill="#535353"/><circle cx="1117.9" cy="60.4" r="2.5" fill="#bcbcbc"/><circle cx="1128.5" cy="60.4" r="2.5" fill="#bcbcbc"/><circle cx="1117.9" cy="69.4" r="2.5" fill="#bcbcbc"/><circle cx="1128.5" cy="69.4" r="2.5" fill="#bcbcbc"/><rect x="1133.4" y="71.6" width="2" height="2" fill="#bcbcbc"/><rect x="1154.6" y="59.8" width="13" height="12.6" fill="none" stroke="#c2c2c2" stroke-width="2"/><path d="M1153 75 h16.5" stroke="#6e6e6e" stroke-width="1.8"/><rect x="1206" y="71.4" width="2.2" height="2.2" fill="#ababab"/><rect x="1114.5" y="92.5" width="13.5" height="13.5" fill="#8d8d8d" stroke="#cdcdcd" stroke-width="1"/><rect x="1116.3" y="94.3" width="3.2" height="3.2" fill="#bdbdbd"/><rect x="1123.1" y="94.3" width="3.2" height="3.2" fill="#bdbdbd"/><rect x="1119.7" y="97.7" width="3.2" height="3.2" fill="#bdbdbd"/><rect x="1116.3" y="101.1" width="3.2" height="3.2" fill="#bdbdbd"/><rect x="1123.1" y="101.1" width="3.2" height="3.2" fill="#bdbdbd"/><path d="M1210.25 94.5 L1214.75 99 L1210.25 103.5" fill="none" stroke="#d0d0d0" stroke-width="1.3" stroke-linecap="round" stroke-linejoin="round"/><path d="M1244 57.2 h17 M1244 60.6 h17 M1244 64 h17 M1244 67.4 h17 M1244 70.8 h17 M1244 74.2 h17" stroke="#b9b9b9" stroke-width="1.1"/><path d="M1248.8 63.4 h7.6 M1248.8 67.4 h7.6" stroke="#f2f2f2" stroke-width="2.2"/><path d="M1277 57.5 h19 M1277 61.5 h4 M1292 61.5 h4 M1277 65.5 h4 M1292 65.5 h4 M1277 69.5 h4 M1292 69.5 h4 M1277 73.5 h19" stroke="#cdcdcd" stroke-width="1.2"/><rect x="1283.5" y="60" width="6" height="11.5" fill="none" stroke="#cdcdcd" stroke-width="1.1"/><path d="M1244 91.5 h19 M1244 107 h19 M1244 95.5 h4 M1244 99.5 h3 M1244 103.5 h4" stroke="#cdcdcd" stroke-width="1.2"/><circle cx="1253" cy="100" r="5.2" fill="#cdcdcd"/><path d="M1261 98 h3 M1261 102 h3" stroke="#cdcdcd" stroke-width="1.2"/><circle cx="1259.5" cy="93.5" r="4.3" fill="#2d8ceb"/><path d="M1277 91.5 h19 M1277 103 h19 M1277 107 h19" stroke="#cdcdcd" stroke-width="1.2"/><rect x="1282.5" y="94" width="8" height="5.5" fill="#cdcdcd"/><path d="M1320 61 h13 v13 h-13 z" fill="none" stroke="#6e7f93" stroke-width="1" stroke-dasharray="2 2"/><rect x="1317.5" y="58.5" width="5.5" height="5.5" rx="1" fill="#2d8ceb"/><rect x="1330.5" y="58.5" width="5.5" height="5.5" rx="1" fill="#2d8ceb"/><rect x="1317.5" y="71.5" width="5.5" height="5.5" rx="1" fill="#2d8ceb"/><rect x="1330.5" y="71.5" width="5.5" height="5.5" rx="1" fill="#2d8ceb"/><path d="M1348.5 62.8 L1352.5 58.8 L1356.5 62.8" fill="none" stroke="#d0d0d0" stroke-width="1.2" stroke-linecap="round" stroke-linejoin="round"/><path d="M1348.5 70.2 L1352.5 74.2 L1356.5 70.2" fill="none" stroke="#d0d0d0" stroke-width="1.2" stroke-linecap="round" stroke-linejoin="round"/><path d="M1346 90.5 h76 v17.5" fill="none" stroke="#111" stroke-width="1.6"/><path d="M1434.0 97.25 L1438.5 101.75 L1443.0 97.25" fill="none" stroke="#d0d0d0" stroke-width="1.3" stroke-linecap="round" stroke-linejoin="round"/><rect x="1476" y="61" width="14" height="10" fill="none" stroke="#a8a8a8" stroke-width="2.2"/><rect x="1473.5" y="58" width="4.5" height="4.5" fill="#a8a8a8"/><rect x="1488" y="58" width="4.5" height="4.5" fill="#a8a8a8"/><rect x="1473.5" y="68.5" width="4.5" height="4.5" fill="#a8a8a8"/><rect x="1488" y="68.5" width="4.5" height="4.5" fill="#a8a8a8"/><rect x="1494.5" y="71.5" width="1.8" height="1.8" fill="#a8a8a8"/><path d="M1719.0 64.25 L1723.5 68.75 L1728.0 64.25" fill="none" stroke="#d0d0d0" stroke-width="1.3" stroke-linecap="round" stroke-linejoin="round"/><rect x="1673" y="93" width="8" height="8" fill="#9a9a9a" stroke="#777" stroke-width="1"/><rect x="1678" y="98" width="8" height="8" fill="#2d2d2d" stroke="#777" stroke-width="1"/><path d="M1689 97.5 h4 a3 3 0 0 1 0 6.5 h-4" fill="none" stroke="#777" stroke-width="1.3"/><rect x="1709.5" y="93.5" width="10.5" height="10.5" fill="none" stroke="#b5b5b5" stroke-width="2"/><path d="M1723 104 L1731 95 M1724 96.5 L1730 102.5" stroke="#8a8a8a" stroke-width="1.4"/><path d="M1867.5 72 L1859.5 83.5 L1865 83.5 L1863 92 L1871.5 79.5 L1866 79.5 Z" fill="#bdbdbd"/><circle cx="1902.8" cy="65.8" r="4.2" fill="none" stroke="#cdcdcd" stroke-width="2.6"/><circle cx="1902.8" cy="65.8" r="6.2" fill="none" stroke="#cdcdcd" stroke-width="2.2" stroke-dasharray="2.4 2.47"/><path d="M1895 95 h16 M1895 99 h16 M1895 103 h16" stroke="#cdcdcd" stroke-width="1.5"/><path d="M183.6 133.4 L190.6 140.6 M190.6 133.4 L183.6 140.6" stroke="#f2f2f2" stroke-width="2.2"/></svg>
</body></html>
